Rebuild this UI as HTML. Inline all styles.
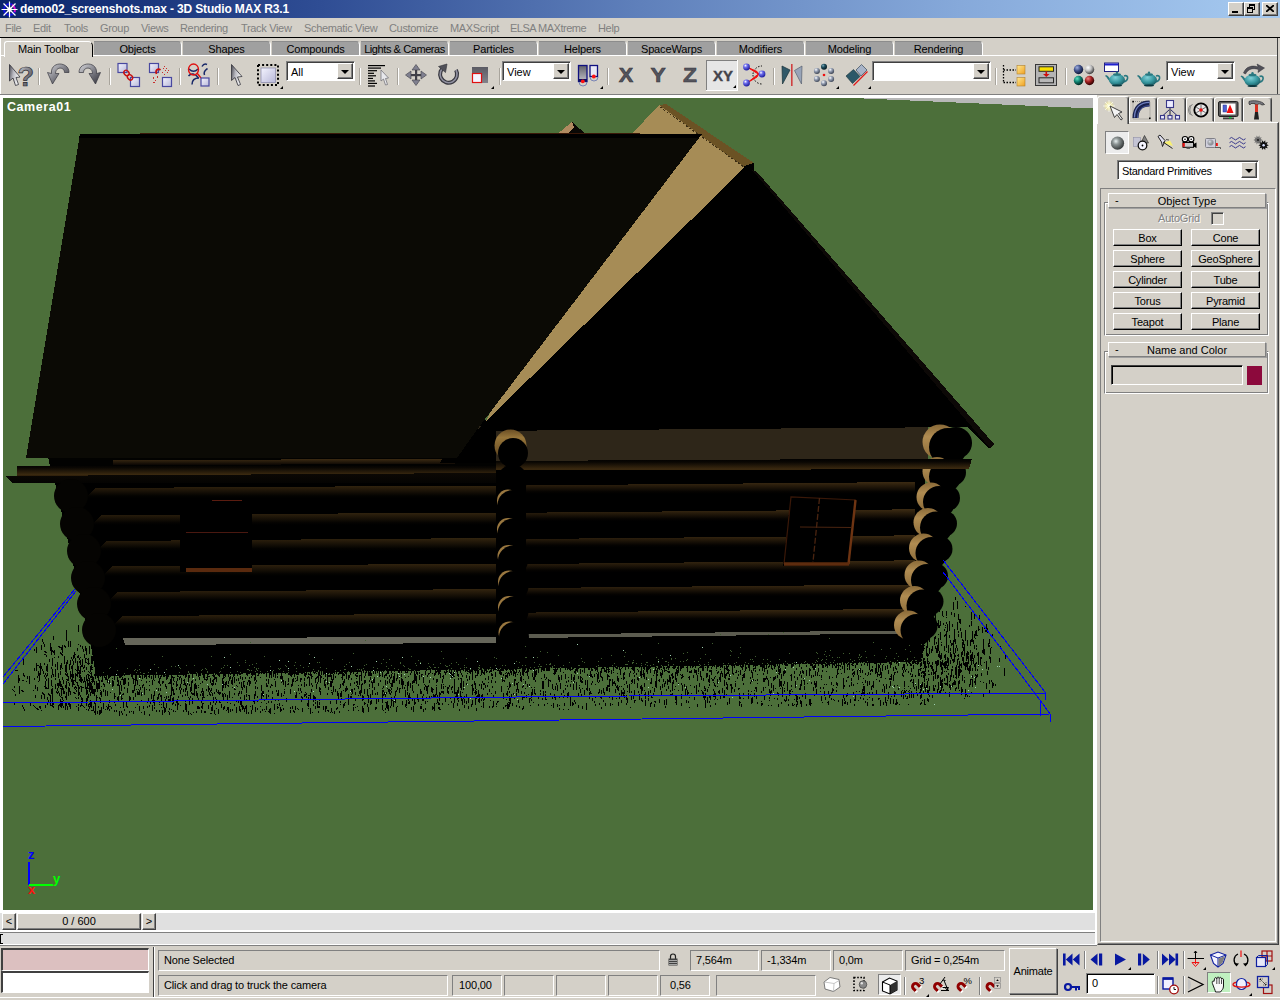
<!DOCTYPE html>
<html>
<head>
<meta charset="utf-8">
<title>3D Studio MAX</title>
<style>
*{box-sizing:border-box;margin:0;padding:0}
html,body{width:1280px;height:1000px;overflow:hidden;background:#d4d0c8;font-family:"Liberation Sans",sans-serif;font-size:11px;color:#000}
.abs{position:absolute}
#title{position:absolute;left:0;top:0;width:1280px;height:18px;background:linear-gradient(90deg,#0a246a 0%,#2f4d94 25%,#5f80bb 50%,#86a9da 75%,#a6caf0 100%)}
#title .t{position:absolute;left:20px;top:1px;color:#fff;font-weight:bold;font-size:12px;line-height:16px;white-space:nowrap;letter-spacing:-0.15px}
.wbtn{position:absolute;top:2px;width:16px;height:14px;background:#d4d0c8;border:1px solid;border-color:#fff #404040 #404040 #fff;box-shadow:inset -1px -1px 0 #808080}
#menu{position:absolute;left:0;top:18px;width:1280px;height:19px;background:#d4d0c8}
#menu span{position:absolute;top:4px;color:#808080;font-size:11px;line-height:13px;white-space:nowrap;letter-spacing:-0.33px}
#tabline{position:absolute;left:0;top:37px;width:1280px;height:1px;background:#000}
.tab{position:absolute;top:41px;height:14px;width:88px;background:#a0a0a0;border-radius:0 4px 0 0;border-right:1px solid #fff;border-top:1px solid #8c8c8c;text-align:center;font-size:11px;line-height:14px;white-space:nowrap;color:#000;letter-spacing:-0.15px}
.tab.act{background:#d4d0c8;top:41px;height:16px;border:1px solid #fff;border-bottom:none;border-right:1px solid #000;border-radius:3px 5px 0 0;line-height:14px;z-index:3}
#tabunder{position:absolute;left:0;top:55px;width:1278px;height:1px;background:#fff}
#tbbottom{position:absolute;left:0;top:94px;width:1280px;height:1px;background:#808080}
#vpframe{position:absolute;left:0;top:95px;width:1097px;height:818px;background:#fff}
#vp{position:absolute;left:3px;top:98px;width:1090px;height:812px;background:#4c6f3a;overflow:hidden}
.sep{position:absolute;top:63px;width:2px;height:26px;border-left:1px solid #808080;border-right:1px solid #fff}
.raised{background:#d4d0c8;border:1px solid;border-color:#fff #404040 #404040 #fff;box-shadow:inset -1px -1px 0 #808080}
.sunken{border:1px solid;border-color:#808080 #fff #fff #808080;box-shadow:inset 1px 1px 0 #404040}
.btn{position:absolute;background:#d4d0c8;border:1px solid;border-color:#fff #404040 #404040 #fff;box-shadow:inset -1px -1px 0 #808080;text-align:center;font-size:12px;white-space:nowrap}
.combo{position:absolute;background:#fff;border:1px solid;border-color:#808080 #fff #fff #808080;box-shadow:inset 1px 1px 0 #404040;font-size:12px}
.combo .tx{position:absolute;left:4px;top:1px;line-height:14px;white-space:nowrap}
.combo .dd{position:absolute;right:1px;top:1px;bottom:1px;width:16px;background:#d4d0c8;border:1px solid;border-color:#fff #404040 #404040 #fff;box-shadow:inset -1px -1px 0 #808080}
.combo .dd:after{content:"";position:absolute;left:3px;top:6px;border:4px solid transparent;border-top:4px solid #000;border-bottom:none}
.field{position:absolute;background:#d4d0c8;border:1px solid;border-color:#808080 #fff #fff #808080;font-size:12px;line-height:19px;white-space:nowrap;padding-left:5px}

#cmdouter{position:absolute;left:1097px;top:122px;width:182px;height:823px;background:#d4d0c8;border:1px solid;border-color:#d4d0c8 #404040 #404040 #d4d0c8;box-shadow:inset -1px -1px 0 #808080}
#cmdinner{position:absolute;left:1100px;top:188px;width:176px;height:754px;border:1px solid;border-color:#808080 #fff #fff #808080}
.ctab{position:absolute;top:97px;width:29px;height:25px;background:#d4d0c8;border:1px solid;border-color:#fff #404040 #d4d0c8 #fff;border-radius:3px 3px 0 0;box-shadow:inset -1px 0 0 #808080}
.ctab.act{top:96px;height:28px;width:32px;z-index:2;border-bottom:none}
.grp{position:absolute;border:1px solid;border-color:#808080 #fff #fff #808080;box-shadow:inset 1px 1px 0 #fff,inset -1px -1px 0 #808080}
.roll{position:absolute;left:1108px;width:158px;height:15px;background:#d4d0c8;border:1px solid;border-color:#fff #808080 #808080 #fff;box-shadow:1px 1px 0 #a0a0a0;text-align:center;font-size:11px;line-height:14px}
.roll i{position:absolute;left:6px;top:-1px;font-style:normal}
.pbtn{position:absolute;width:69px;height:17px;background:#d4d0c8;border:1px solid;border-color:#fff #000 #000 #fff;box-shadow:inset -1px -1px 0 #808080;text-align:center;font-size:11px;line-height:14px;padding-top:1px;letter-spacing:-0.2px}
.sf{position:absolute;height:21px;border:1px solid;border-color:#808080 #fff #fff #808080;font-size:11px;line-height:19px;padding-left:5px;white-space:nowrap;letter-spacing:-0.15px}
.vsep{position:absolute;width:2px;border-left:1px solid #808080;border-right:1px solid #fff}
.ico{position:absolute}
</style>
</head>
<body>
<!-- TITLE -->
<div id="title"><svg class="abs" style="left:1px;top:1px" width="17" height="17" viewBox="0 0 17 17"><circle cx="8.5" cy="8.5" r="5.5" fill="none" stroke="#1010e0" stroke-width="2"/><path d="M11,4 A5.500,5.500 0 0 1 13.500,11" fill="none" stroke="#e010c0" stroke-width="2"/><g stroke="#fff" stroke-width="1.200"><path d="M8.500,0.500V16.500M0.500,8.500H16.500M2.500,2.500L14.500,14.500M14.500,2.500L2.500,14.500"/></g><circle cx="8.500" cy="8.500" r="2.200" fill="#fff"/></svg><div class="t">demo02_screenshots.max - 3D Studio MAX R3.1</div>
<div class="wbtn" style="left:1228px"><i style="position:absolute;left:3px;top:8px;width:6px;height:2px;background:#000"></i></div><div class="wbtn" style="left:1244px"><i style="position:absolute;left:4px;top:1px;width:6px;height:6px;border:1px solid #000;border-top-width:2px"></i><i style="position:absolute;left:2px;top:4px;width:6px;height:6px;border:1px solid #000;border-top-width:2px;background:#d4d0c8"></i></div><div class="wbtn" style="left:1262px"><svg style="position:absolute;left:3px;top:2px" width="8" height="7" viewBox="0 0 8 7"><path d="M0,0L8,7M8,0L0,7" stroke="#000" stroke-width="1.800"/></svg></div>
</div>
<!-- MENU -->
<div id="menu">
<span style="left:5px">File</span><span style="left:33px">Edit</span><span style="left:64px">Tools</span><span style="left:100px">Group</span><span style="left:141px">Views</span><span style="left:180px">Rendering</span><span style="left:241px">Track View</span><span style="left:304px">Schematic View</span><span style="left:389px">Customize</span><span style="left:450px">MAXScript</span><span style="left:510px;letter-spacing:-0.5px">ELSA MAXtreme</span><span style="left:598px">Help</span>
</div>
<div id="tabline"></div>
<!-- TABS -->
<div class="tab act" style="left:4px;width:89px">Main Toolbar</div>
<div class="tab" style="left:94px">Objects</div>
<div class="tab" style="left:183px">Shapes</div>
<div class="tab" style="left:272px">Compounds</div>
<div class="tab" style="left:361px;letter-spacing:-0.42px">Lights &amp; Cameras</div>
<div class="tab" style="left:450px">Particles</div>
<div class="tab" style="left:539px">Helpers</div>
<div class="tab" style="left:628px">SpaceWarps</div>
<div class="tab" style="left:717px">Modifiers</div>
<div class="tab" style="left:806px">Modeling</div>
<div class="tab" style="left:895px">Rendering</div>
<div id="tabunder"></div><div class="abs" style="left:0;top:38px;width:1px;height:56px;background:#fff"></div><div class="abs" style="left:1277px;top:38px;width:1px;height:56px;background:#404040"></div>
<!-- TOOLBAR -->
<!--TB-START-->
<svg class="abs" style="left:0;top:0" width="1280" height="96" viewBox="0 0 1280 96">
<defs>
<linearGradient id="mt" x1="0" y1="0" x2="1" y2="1"><stop offset="0" stop-color="#d8d8dc"/><stop offset="0.5" stop-color="#808088"/><stop offset="1" stop-color="#303038"/></linearGradient>
<linearGradient id="mt2" x1="0" y1="0" x2="0" y2="1"><stop offset="0" stop-color="#404048"/><stop offset="0.5" stop-color="#a0a0a8"/><stop offset="1" stop-color="#404048"/></linearGradient>
<linearGradient id="bx" x1="0" y1="0" x2="1" y2="1"><stop offset="0" stop-color="#f4f4ff"/><stop offset="1" stop-color="#b8b8d8"/></linearGradient>
<radialGradient id="ball" cx="0.35" cy="0.3" r="0.7"><stop offset="0" stop-color="#fff"/><stop offset="0.35" stop-color="#7070f0"/><stop offset="1" stop-color="#2020a0"/></radialGradient>
<radialGradient id="gball" cx="0.35" cy="0.3" r="0.7"><stop offset="0" stop-color="#fff"/><stop offset="0.4" stop-color="#9aa4b8"/><stop offset="1" stop-color="#404858"/></radialGradient>
<radialGradient id="tball" cx="0.35" cy="0.3" r="0.7"><stop offset="0" stop-color="#80b0c0"/><stop offset="0.4" stop-color="#205060"/><stop offset="1" stop-color="#001820"/></radialGradient>
<radialGradient id="b1" cx="0.35" cy="0.3" r="0.7"><stop offset="0" stop-color="#a0b0e0"/><stop offset="0.5" stop-color="#405088"/><stop offset="1" stop-color="#101838"/></radialGradient>
<radialGradient id="b2" cx="0.35" cy="0.3" r="0.7"><stop offset="0" stop-color="#fff"/><stop offset="0.5" stop-color="#c0c0c0"/><stop offset="1" stop-color="#404040"/></radialGradient>
<radialGradient id="b3" cx="0.35" cy="0.3" r="0.7"><stop offset="0" stop-color="#60e0c0"/><stop offset="0.5" stop-color="#108070"/><stop offset="1" stop-color="#002820"/></radialGradient>
<radialGradient id="b4" cx="0.35" cy="0.3" r="0.7"><stop offset="0" stop-color="#f08080"/><stop offset="0.5" stop-color="#a02020"/><stop offset="1" stop-color="#300000"/></radialGradient>
<radialGradient id="tp" cx="0.4" cy="0.3" r="0.8"><stop offset="0" stop-color="#80d0d8"/><stop offset="0.5" stop-color="#3898a0"/><stop offset="1" stop-color="#104850"/></radialGradient>
<linearGradient id="yl" x1="0" y1="0" x2="1" y2="1"><stop offset="0" stop-color="#ffe890"/><stop offset="1" stop-color="#f0a020"/></linearGradient>
<linearGradient id="pv" x1="0" y1="0" x2="0" y2="1"><stop offset="0" stop-color="#606068"/><stop offset="1" stop-color="#c0c0c8"/></linearGradient>
<g id="teapot"><path d="M-11,-4 C-8,-3 -7,0 -6,2 L-7,3 C-9,1 -10,-2 -12,-3 Z" fill="#2a7880"/><path d="M7,-3 C12,-5 12,2 6,3" fill="none" stroke="#2a7880" stroke-width="1.6"/><ellipse cx="0" cy="1" rx="8" ry="6" fill="url(#tp)"/><ellipse cx="0" cy="-4.5" rx="4" ry="1.3" fill="#2a7880"/><circle cx="0" cy="-6.3" r="1.2" fill="#2a7880"/><ellipse cx="0" cy="6.5" rx="5" ry="1" fill="#0c3840"/></g>
<path id="fly" d="M0,0 h-3 l3,-3 z" fill="#000"/>
<linearGradient id="cur" x1="0" y1="0" x2="1" y2="0.3"><stop offset="0" stop-color="#484850"/><stop offset="0.45" stop-color="#b8b8c0"/><stop offset="1" stop-color="#fcfcfc"/></linearGradient>
</defs>
<path d="M9.500,64.500 L9.500,81 L13,78 L15.500,85.500 L18.500,84.500 L16,77.500 L20,77 Z" fill="url(#cur)" stroke="#303038" stroke-width="0.800"/>
<text x="17.500" y="85.500" font-family="Liberation Sans" font-weight="bold" font-size="27" fill="url(#mt)" stroke="#2a2a30" stroke-width="0.700">?</text>
<rect x="38" y="68" width="1" height="17" fill="#a8a49c"/><rect x="39" y="68" width="1" height="17" fill="#fff"/>
<path d="M69,72.5 C69,61 50,61 51.5,73.5 L47.5,72.5 L52.5,84 L59,73.5 L55.5,73.5 C55.5,66.5 64.5,66.5 64.5,72.5 Z" fill="url(#mt)" stroke="#383840" stroke-width="0.7"/>
<path d="M79,72.5 C79,61 98,61 96.5,73.5 L100.5,72.5 L95.5,84 L89,73.5 L92.5,73.5 C92.5,66.5 83.5,66.5 83.5,72.5 Z" fill="url(#mt)" stroke="#383840" stroke-width="0.7"/>
<rect x="109" y="68" width="1" height="17" fill="#a8a49c"/><rect x="110" y="68" width="1" height="17" fill="#fff"/>
<rect x="118" y="63.5" width="9" height="9" fill="url(#bx)" stroke="#4848a0" stroke-width="1.2"/>
<rect x="130.5" y="77.5" width="9" height="9" fill="url(#bx)" stroke="#4848a0" stroke-width="1.2"/>
<ellipse cx="126.5" cy="73" rx="2.3" ry="3" fill="none" stroke="#c81010" stroke-width="1.4" transform="rotate(-40 126.5 73)"/><ellipse cx="130" cy="77.3" rx="2.3" ry="3" fill="none" stroke="#c81010" stroke-width="1.4" transform="rotate(-40 130 77.3)"/>
<rect x="149.5" y="63.5" width="9" height="9" fill="url(#bx)" stroke="#4848a0" stroke-width="1.2"/>
<rect x="162.5" y="77.5" width="9" height="9" fill="url(#bx)" stroke="#4848a0" stroke-width="1.2"/>
<path d="M156.5,74 C155,70 158,68 160.5,70" fill="none" stroke="#c81010" stroke-width="1.8"/>
<g fill="#c83030"><rect x="163" y="68" width="1" height="1"/><rect x="165" y="70" width="1" height="1"/><rect x="162" y="72" width="1" height="1"/><rect x="167" y="72" width="1" height="1"/><rect x="164" y="74" width="1" height="1"/><rect x="153" y="77" width="1" height="2"/><rect x="157" y="76" width="1" height="2"/><rect x="155" y="80" width="1" height="1"/><rect x="153" y="82" width="2" height="1"/><rect x="164" y="66" width="1" height="1"/><rect x="166" y="68" width="1" height="1"/><rect x="168" y="70" width="1" height="1"/></g>
<rect x="179" y="68" width="1" height="17" fill="#a8a49c"/><rect x="180" y="68" width="1" height="17" fill="#fff"/>
<g fill="none" stroke="#182868" stroke-width="1.5"><path d="M189,69 C192,72 195,72 198,69"/><path d="M188.5,76 C191,73 195,73 198.5,78"/><path d="M202,66.5 C204,63 206,64 207,64.5"/><path d="M204.500,75 C203,71 206,70 207.500,68.500"/><path d="M192,84.500 C192,79 195,78 199,78"/></g>
<ellipse cx="193.5" cy="69.5" rx="5" ry="5.5" fill="none" stroke="#e01010" stroke-width="1.4"/><path d="M197,73 L201,78" stroke="#e01010" stroke-width="1.4"/>
<rect x="201" y="78" width="8" height="8" fill="url(#bx)" stroke="#4848a0" stroke-width="1.2"/>
<rect x="217" y="68" width="1" height="17" fill="#a8a49c"/><rect x="218" y="68" width="1" height="17" fill="#fff"/>
<path d="M231.500,64.500 L231.500,80.500 L235,77.500 L238,85.500 L240.500,84.500 L237.500,77 L242,76.500 Z" fill="url(#cur)" stroke="#303038" stroke-width="0.800"/>
<rect x="258" y="65" width="20" height="20" fill="none" stroke="#000" stroke-width="2" stroke-dasharray="2,2.1"/><rect x="261" y="68" width="14.500" height="14.500" fill="url(#bx)" stroke="#9090b0" stroke-width="0.8"/>
<use href="#fly" x="283" y="89"/>
<rect x="359" y="68" width="1" height="17" fill="#a8a49c"/><rect x="360" y="68" width="1" height="17" fill="#fff"/>
<rect x="368" y="65.0" width="17" height="1.2" fill="#000"/>
<rect x="368" y="67.5" width="13" height="1.2" fill="#000"/>
<rect x="368" y="70.1" width="9" height="1.2" fill="#000"/>
<rect x="368" y="72.7" width="6" height="1.2" fill="#000"/>
<rect x="368" y="75.2" width="8" height="1.2" fill="#000"/>
<rect x="368" y="77.8" width="5" height="1.2" fill="#000"/>
<rect x="368" y="80.3" width="7" height="1.2" fill="#000"/>
<rect x="368" y="82.8" width="9" height="1.2" fill="#000"/>
<rect x="368" y="85.4" width="7" height="1.2" fill="#000"/>
<path d="M381,70 L381,81 L383.500,79 L385.500,85 L387.500,84.500 L385.500,78.500 L388.500,78 Z" fill="#e8e8ec" stroke="#686870" stroke-width="0.7"/>
<rect x="397" y="68" width="1" height="17" fill="#a8a49c"/><rect x="398" y="68" width="1" height="17" fill="#fff"/>
<g fill="#404048"><rect x="415" y="66" width="2.2" height="18"/><rect x="407" y="74" width="18" height="2.2"/></g>
<g fill="#808090" stroke="#404048" stroke-width="0.6"><path d="M416,64.500 L420,70 L412,70 Z"/><path d="M416,85.500 L420,80 L412,80 Z"/><path d="M405.500,75 L411,71 L411,79 Z"/><path d="M426.500,75 L421,71 L421,79 Z"/></g>
<path d="M445,66.500 A8.500,8.500 0 1 0 456,70" fill="none" stroke="#383840" stroke-width="4"/><path d="M445,66.500 A8.500,8.500 0 1 0 456,70" fill="none" stroke="#9090a0" stroke-width="1.6"/>
<path d="M438.500,66.500 L447,64 L445.500,72.500 Z" fill="#505058" stroke="#303038" stroke-width="0.6"/>
<rect x="472" y="67" width="16" height="16" fill="url(#pv)"/><rect x="472" y="67" width="16" height="16" fill="#585860" opacity="0.6"/><rect x="472.500" y="73.500" width="9" height="9" fill="#f4f4ff" stroke="#e01010" stroke-width="1.2"/>
<use href="#fly" x="494" y="89"/>
<rect x="499" y="68" width="1" height="17" fill="#a8a49c"/><rect x="500" y="68" width="1" height="17" fill="#fff"/>
<rect x="578.500" y="65.500" width="8.500" height="16" fill="url(#pv)" stroke="#101080" stroke-width="1.3"/><rect x="590" y="65.500" width="7.500" height="11" fill="#e8e8f4" stroke="#101080" stroke-width="1.3"/>
<path d="M579,82 A4,4 0 0 0 587,82" fill="none" stroke="#6070b0" stroke-width="0.8"/><path d="M590,77 A4,4 0 0 0 598,77" fill="none" stroke="#6070b0" stroke-width="0.8"/>
<rect x="578.500" y="79" width="8.500" height="2.500" fill="#101060"/><circle cx="582.800" cy="81.300" r="1.900" fill="#ff1010"/><circle cx="593.800" cy="76.500" r="1.900" fill="#ff1010"/>
<use href="#fly" x="603" y="89"/>
<rect x="607" y="68" width="1" height="17" fill="#a8a49c"/><rect x="608" y="68" width="1" height="17" fill="#fff"/>
<text x="618.8" y="82" font-family="Liberation Sans" font-weight="bold" font-size="19.500" fill="#54545c" stroke="#34343c" stroke-width="0.500" textLength="14.5" lengthAdjust="spacingAndGlyphs">X</text>
<text x="650.5" y="82" font-family="Liberation Sans" font-weight="bold" font-size="19.500" fill="#54545c" stroke="#34343c" stroke-width="0.500" textLength="15.3" lengthAdjust="spacingAndGlyphs">Y</text>
<text x="683" y="82" font-family="Liberation Sans" font-weight="bold" font-size="19.500" fill="#54545c" stroke="#34343c" stroke-width="0.500" textLength="14" lengthAdjust="spacingAndGlyphs">Z</text>
<rect x="706" y="60" width="32" height="31" fill="#e6e6e6"/><rect x="706" y="60" width="32" height="1" fill="#808080"/><rect x="706" y="60" width="1" height="31" fill="#808080"/><rect x="706" y="90" width="32" height="1" fill="#fff"/><rect x="737" y="60" width="1" height="31" fill="#fff"/>
<text x="713" y="81.300" font-family="Liberation Sans" font-weight="bold" font-size="14" fill="#44444c" stroke="#44444c" stroke-width="0.400" textLength="20" lengthAdjust="spacingAndGlyphs">XY</text>
<use href="#fly" x="736" y="88"/>
<path d="M753,74 A9,9 0 0 1 762,66 M753,75 A9,9 0 0 0 762,84" fill="none" stroke="#000" stroke-width="1" stroke-dasharray="1.500,1.500"/>
<path d="M747,67 L759,74.500 L757,71.500 Z M747,83 L759,73.500 L757,77 Z" fill="#f01010" stroke="#f01010" stroke-width="1"/>
<circle cx="746.5" cy="67" r="3.400" fill="url(#ball)"/>
<circle cx="762" cy="74" r="3.400" fill="url(#ball)"/>
<circle cx="746.5" cy="83" r="3.400" fill="url(#ball)"/>
<rect x="773" y="68" width="1" height="17" fill="#a8a49c"/><rect x="774" y="68" width="1" height="17" fill="#fff"/>
<path d="M782,66 L790,70 L782.500,84 Z" fill="#305868" stroke="#183038" stroke-width="0.7"/><path d="M802,66 L794.500,70.500 L801.500,84 Z" fill="#98a4b8" stroke="#586070" stroke-width="0.7"/><rect x="791" y="64" width="1.600" height="22" fill="#d04040"/>
<circle cx="824.0" cy="66.8" r="3" fill="url(#tball)"/>
<circle cx="831.1" cy="70.9" r="3" fill="url(#gball)"/>
<circle cx="831.1" cy="79.1" r="3" fill="url(#gball)"/>
<circle cx="824.0" cy="83.2" r="3" fill="url(#gball)"/>
<circle cx="816.9" cy="79.1" r="3" fill="url(#gball)"/>
<circle cx="816.9" cy="70.9" r="3" fill="url(#gball)"/>
<circle cx="824" cy="75" r="1.300" fill="#f01010"/><use href="#fly" x="839" y="89"/>
<path d="M846,76 L853.500,69.500 L860,76.500 L852.500,83.500 Z" fill="#2c5868" stroke="#183038" stroke-width="0.6"/><path d="M856,70 L861.500,64.500 L867,70 L861,76 Z" fill="#a8b4c8" stroke="#485868" stroke-width="0.8"/><path d="M853.500,85.500 L867.500,71.500" stroke="#e01818" stroke-width="1.300"/><use href="#fly" x="871" y="89"/>
<rect x="995" y="68" width="1" height="17" fill="#a8a49c"/><rect x="996" y="68" width="1" height="17" fill="#fff"/>
<path d="M1003.500,65 V82.500 M1003.500,70 H1016 M1003.500,82.500 H1016" fill="none" stroke="#000" stroke-width="1.300" stroke-dasharray="1.500,1.500"/><rect x="1017" y="65.500" width="8" height="8.500" fill="url(#yl)" stroke="#b08030" stroke-width="0.6"/><rect x="1017" y="77.500" width="8" height="8.500" fill="url(#yl)" stroke="#b08030" stroke-width="0.6"/>
<rect x="1035.500" y="64.500" width="21" height="21" fill="#b4b4b4" stroke="#383838" stroke-width="1"/><rect x="1039" y="66.800" width="14.500" height="4.500" fill="#f8e000" stroke="#282828" stroke-width="1"/><rect x="1039" y="77.800" width="14.500" height="5" fill="#b8b8b8" stroke="#282828" stroke-width="1"/><path d="M1045.500,71.500 h1.600 v2.500 h2.500 l-3.300,3 l-3.300,-3 h2.500 z" fill="#d01010"/>
<rect x="1065" y="68" width="1" height="17" fill="#a8a49c"/><rect x="1066" y="68" width="1" height="17" fill="#fff"/>
<circle cx="1078.5" cy="69.5" r="4.700" fill="url(#b1)"/>
<circle cx="1089.5" cy="69.5" r="4.700" fill="url(#b2)"/>
<circle cx="1078.5" cy="80.5" r="4.700" fill="url(#b3)"/>
<circle cx="1089.5" cy="80.5" r="4.700" fill="url(#b4)"/>
<rect x="1104.500" y="63" width="14" height="8.500" fill="#fff" stroke="#202080" stroke-width="1"/><rect x="1105" y="63.500" width="13" height="2" fill="#2020d0"/><use href="#teapot" x="1117" y="79"/>
<use href="#teapot" x="1149" y="79"/><use href="#fly" x="1163" y="89"/>
<use href="#teapot" x="1252.500" y="79.500"/><path d="M1243.500,73 C1246,66 1253,65 1258,67 L1257,64 L1264.500,68 L1258,72.500 L1258.500,69.500 C1253,67.500 1248,69 1245.500,74 Z" fill="#505058" stroke="#303038" stroke-width="0.5"/>
</svg>
<div class="combo" style="left:286px;top:61px;width:69px;height:20px"><span class="tx" style="font-size:11px;top:3px">All</span><span class="dd"></span></div>
<div class="combo" style="left:502px;top:61px;width:69px;height:20px"><span class="tx" style="font-size:11px;top:3px">View</span><span class="dd"></span></div>
<div class="combo" style="left:872px;top:61px;width:119px;height:20px"><span class="dd"></span></div>
<div class="combo" style="left:1166px;top:61px;width:69px;height:20px"><span class="tx" style="font-size:11px;top:3px">View</span><span class="dd"></span></div>
<!--TB-END-->
<div id="tbbottom"></div>
<!-- VIEWPORT -->
<div id="vpframe"></div>
<div id="vp">
<!--SCENE-START-->
<svg class="abs" style="left:-3px;top:-98px" width="1280" height="1000" viewBox="0 0 1280 1000" shape-rendering="crispEdges">
<defs>
<linearGradient id="lg" x1="0" y1="0" x2="0" y2="1"><stop offset="0" stop-color="#3c2b13"/><stop offset="0.1" stop-color="#2c1f0d"/><stop offset="0.34" stop-color="#050301"/><stop offset="0.42" stop-color="#000"/><stop offset="1" stop-color="#000"/></linearGradient>
<linearGradient id="bm" x1="0" y1="0" x2="0" y2="1"><stop offset="0" stop-color="#000"/><stop offset="0.3" stop-color="#0a0703"/><stop offset="0.9" stop-color="#3c2a10"/><stop offset="1" stop-color="#2a1c0a"/></linearGradient>
<linearGradient id="bm2" x1="0" y1="0" x2="0" y2="1"><stop offset="0" stop-color="#0c0804"/><stop offset="1" stop-color="#040302"/></linearGradient>
<linearGradient id="cr" x1="0" y1="0" x2="0" y2="1"><stop offset="0" stop-color="#8a6a38"/><stop offset="0.35" stop-color="#b08c52"/><stop offset="1" stop-color="#8a6a38"/></linearGradient>
<linearGradient id="lg2" x1="0" y1="0" x2="0" y2="1"><stop offset="0" stop-color="#3c2b13"/><stop offset="1" stop-color="#0a0603"/></linearGradient>
<linearGradient id="cr2" x1="0" y1="0" x2="0" y2="1"><stop offset="0" stop-color="#6a4e24"/><stop offset="0.25" stop-color="#96753a"/><stop offset="0.6" stop-color="#7a5c2c"/><stop offset="1" stop-color="#3a2a10"/></linearGradient>
<linearGradient id="lgL" x1="0" y1="0" x2="0" y2="1"><stop offset="0" stop-color="#33250f"/><stop offset="0.1" stop-color="#261b0b"/><stop offset="0.36" stop-color="#040301"/><stop offset="0.44" stop-color="#000"/><stop offset="1" stop-color="#000"/></linearGradient>
</defs>
<polygon points="852,98 1094,98 1094,108.5" fill="#b8b8b8"/>
<polygon points="556,135 572,122 577,127 566,135" fill="#b08a60"/>
<polygon points="572,122 587,135 566,135 574,127" fill="#0a0805"/>
<polygon points="455,462 500,462 500,420 474,420" fill="#000"/>
<polygon points="630,136 659,105 748,169 480,433" fill="#a68c56"/>
<polygon points="659,105 666,104 754,163 744,167" fill="#6b5224"/>
<polygon points="744,166 754,163 754,172 745,174" fill="#000"/>
<line x1="660" y1="107" x2="744" y2="167" stroke="#3a2c14" stroke-width="1" stroke-dasharray="2,2"/>
<rect x="478" y="426" width="450" height="36" fill="#2e2619"/>
<polygon points="744,168 754,172 993,445 989,448 967,427 476,431" fill="#000"/>
<polygon points="752,170 757,172 994,444 990,448" fill="#0c0806"/>
<polygon points="54,478 496,462 925,460 925,640 922,662 96,676 90,640" fill="#000"/>
<polygon points="95,488 496,485.5 496,511.5 83,514 83,500" fill="url(#lgL)"/>
<polygon points="101,515 496,512.5 496,538.5 89,541 89,527" fill="url(#lgL)"/>
<polygon points="106,541 496,538 496,564 94,567 94,553" fill="url(#lgL)"/>
<polygon points="112,566.5 496,563.5 496,589.5 100,592.5 100,578.5" fill="url(#lgL)"/>
<polygon points="117,592 496,589 496,615 105,618 105,604" fill="url(#lgL)"/>
<polygon points="122,616 496,613.6 496,639.6 110,642 110,628" fill="url(#lgL)"/>
<polygon points="526,485.4 915,482 915,507 526,510.4" fill="url(#lg)"/>
<polygon points="526,512.7 915,509.3 915,534.3 526,537.7" fill="url(#lg)"/>
<polygon points="526,539 915,535.3 915,560.3 526,564" fill="url(#lg)"/>
<polygon points="526,564 915,560.3 915,585.3 526,589" fill="url(#lg)"/>
<polygon points="526,588 915,584.5 915,609.5 526,613" fill="url(#lg)"/>
<polygon points="526,612.6 915,608.8 915,633.8 526,637.6" fill="url(#lg)"/>
<polygon points="123,638 496,637 496,643 125,645" fill="#66665a"/>
<polygon points="526,634.500 905,630.500 905,633.500 526,638" fill="#5c5c50"/>
<polygon points="17,466 496,464 496,473 17,476" fill="url(#bm)"/>
<polygon points="6,476 496,473 496,483 12,483" fill="url(#bm2)"/>
<polygon points="48,457 496,457 496,466 50,466" fill="#020201"/>
<polygon points="113,460 455,459 455,464 113,465" fill="url(#lg2)"/>
<polygon points="455,431 478,431 496,431 496,463 440,463" fill="#000"/>
<polygon points="496,461 972,458.500 969,469 496,470.500" fill="url(#bm)"/>
<circle cx="71" cy="496" r="17" fill="#050402" shape-rendering="auto"/>
<circle cx="77" cy="524" r="17" fill="#050402" shape-rendering="auto"/>
<circle cx="84" cy="551" r="17" fill="#050402" shape-rendering="auto"/>
<circle cx="88" cy="578" r="17" fill="#050402" shape-rendering="auto"/>
<circle cx="94" cy="604" r="17" fill="#050402" shape-rendering="auto"/>
<circle cx="99" cy="630" r="17" fill="#050402" shape-rendering="auto"/>
<polygon points="80,134 702,134 476,431 457,458 26,458" fill="#0b0a05"/>
<polygon points="80,134 702,134 699,138 79,138" fill="#000"/>
<line x1="140" y1="133.5" x2="640" y2="133.5" stroke="#3a1808" stroke-width="1"/>
<circle cx="510.5" cy="445.5" r="16" fill="url(#cr2)" shape-rendering="auto"/><circle cx="513" cy="453" r="15" fill="#000" shape-rendering="auto"/>
<circle cx="512.5" cy="479.5" r="15" fill="#000" shape-rendering="auto"/>
<circle cx="508" cy="500.5" r="11" fill="#9a7840" shape-rendering="auto"/>
<circle cx="512.5" cy="505.0" r="15" fill="#000" shape-rendering="auto"/>
<circle cx="508" cy="529" r="11" fill="#9a7840" shape-rendering="auto"/>
<circle cx="512.5" cy="533.5" r="15" fill="#000" shape-rendering="auto"/>
<circle cx="508.5" cy="556" r="11" fill="#9a7840" shape-rendering="auto"/>
<circle cx="513.0" cy="560.5" r="15" fill="#000" shape-rendering="auto"/>
<circle cx="509" cy="581.5" r="11" fill="#9a7840" shape-rendering="auto"/>
<circle cx="513.5" cy="586.0" r="15" fill="#000" shape-rendering="auto"/>
<circle cx="509" cy="607" r="11" fill="#9a7840" shape-rendering="auto"/>
<circle cx="513.5" cy="611.5" r="15" fill="#000" shape-rendering="auto"/>
<circle cx="509.5" cy="632.5" r="11" fill="#9a7840" shape-rendering="auto"/>
<circle cx="514.0" cy="637.0" r="15" fill="#000" shape-rendering="auto"/>
<rect x="497" y="640" width="30" height="28" fill="#000"/>
<circle cx="940" cy="442" r="17.5" fill="url(#cr)" shape-rendering="auto"/>
<circle cx="948" cy="447" r="19" fill="#000" shape-rendering="auto"/>
<circle cx="956" cy="443" r="16" fill="#000" shape-rendering="auto"/>
<circle cx="937" cy="471.5" r="14.5" fill="url(#cr)" shape-rendering="auto"/>
<circle cx="945" cy="476.5" r="16" fill="#000" shape-rendering="auto"/>
<circle cx="953" cy="472.5" r="13" fill="#000" shape-rendering="auto"/>
<circle cx="931" cy="497" r="14.5" fill="url(#cr)" shape-rendering="auto"/>
<circle cx="939" cy="502" r="16" fill="#000" shape-rendering="auto"/>
<circle cx="947" cy="498" r="13" fill="#000" shape-rendering="auto"/>
<circle cx="928" cy="522.5" r="14.5" fill="url(#cr)" shape-rendering="auto"/>
<circle cx="936" cy="527.5" r="16" fill="#000" shape-rendering="auto"/>
<circle cx="944" cy="523.5" r="13" fill="#000" shape-rendering="auto"/>
<circle cx="923.5" cy="548" r="14.5" fill="url(#cr)" shape-rendering="auto"/>
<circle cx="931.5" cy="553" r="16" fill="#000" shape-rendering="auto"/>
<circle cx="939.5" cy="549" r="13" fill="#000" shape-rendering="auto"/>
<circle cx="919" cy="575" r="14.5" fill="url(#cr)" shape-rendering="auto"/>
<circle cx="927" cy="580" r="16" fill="#000" shape-rendering="auto"/>
<circle cx="935" cy="576" r="13" fill="#000" shape-rendering="auto"/>
<circle cx="914.5" cy="600.5" r="14.5" fill="url(#cr)" shape-rendering="auto"/>
<circle cx="922.5" cy="605.5" r="16" fill="#000" shape-rendering="auto"/>
<circle cx="930.5" cy="601.5" r="13" fill="#000" shape-rendering="auto"/>
<circle cx="908.5" cy="625" r="14.5" fill="url(#cr)" shape-rendering="auto"/>
<circle cx="916.5" cy="630" r="16" fill="#000" shape-rendering="auto"/>
<circle cx="924.5" cy="626" r="13" fill="#000" shape-rendering="auto"/>
<polygon points="900,459.500 972,458.500 969,469 900,469.500" fill="url(#bm)"/>
<rect x="180" y="500" width="72" height="72" fill="#000"/>
<rect x="186" y="568" width="66" height="4" fill="#5a2a0e"/>
<rect x="212" y="500" width="30" height="1" fill="#5a1c10"/><rect x="186" y="532" width="62" height="1" fill="#4a1810"/>
<polygon points="790.6,496.6 856,499.8 849,565.5 783,565.5" fill="#000"/>
<path d="M784,564 L791,497 L856,500" fill="none" stroke="#3a1808" stroke-width="1.200" shape-rendering="auto"/><path d="M855.500,500 L848.500,564" fill="none" stroke="#6e3412" stroke-width="2.400" shape-rendering="auto"/><path d="M784,564 L849,564" fill="none" stroke="#5e2c0e" stroke-width="3.500" shape-rendering="auto"/>
<line x1="819.500" y1="498" x2="813" y2="562" stroke="#4a2410" stroke-width="1.300" stroke-dasharray="6,2" shape-rendering="auto"/><line x1="800" y1="527" x2="852" y2="527.500" stroke="#4a2410" stroke-width="1.200" shape-rendering="auto"/>
<path d="M360,676l0,-1M779,668l0,-6M853,670l1,-1M440,678l1,-5M137,695l0,-2M573,681l0,-2M556,672l0,-3M543,689l0,-5M174,695l0,-2M170,701l0,-6M609,685l1,-5M742,681l0,-4M340,703l0,-2M571,687l-1,-3M330,713l1,-1M226,685l1,-4M121,700l0,-5M374,683l-1,-4M145,678l-1,-2M674,669l-1,-2M327,685l0,-3M880,674l0,-6M503,676l0,-2M709,679l0,-4M228,687l0,-2M777,700l1,-2M918,688l0,-3M215,679l0,-2M98,708l0,-2M325,677l0,-5M601,678l0,-2M472,705l1,-5M423,683l1,-4M140,678l-1,-2M224,685l0,-1M88,681l0,-1M604,670l1,-2M213,682l0,-3M487,673l-1,-4M492,679l0,-2M719,694l0,-4M522,675l0,-5M211,693l0,-1M911,698l0,-2M852,675l0,-2M623,690l0,-2M777,694l0,-2M523,680l0,-1M753,681l0,-2M464,708l0,-3M155,678l0,-4M372,688l0,-6M491,694l0,-1M854,694l-1,-2M836,678l0,-3M762,706l-1,-3M425,710l0,-2M924,664l-1,-6M767,669l-1,-6M641,678l0,-5M106,707l0,-1M453,705l0,-2M300,682l0,-2M306,686l0,-2M854,675l1,-4M784,701l0,-2M528,670l0,-4M600,698l0,-2M207,696l0,-1M362,690l-1,-5M748,668l0,-5M297,681l-1,-1M560,698l-1,-1M362,712l0,-6M671,682l-1,-5M515,677l0,-5M864,700l-1,-2M203,678l0,-4M149,682l0,-1M651,698l0,-2M208,709l0,-4M716,669l0,-4M921,696l1,-2M925,676l0,-3M388,674l0,-3M372,687l1,-1M367,694l0,-5M183,712l0,-2M158,683l0,-2M724,698l1,-2M213,711l-1,-6M677,669l0,-1M446,673l0,-1M762,668l0,-2M310,676l0,-1M925,676l0,-2M124,702l0,-1M308,678l0,-2M535,675l0,-4M315,704l0,-2M100,703l0,-5M520,676l0,-4M642,691l1,-4M905,672l0,-2M376,704l1,-2M921,704l0,-2M147,703l1,-2M225,677l0,-3M592,694l-1,-1M244,682l0,-1M394,681l0,-5M293,712l0,-2M388,673l0,-3M487,687l0,-2M512,670l0,-2M209,695l0,-3M340,695l0,-1M641,694l1,-6M731,693l0,-4M327,695l0,-2M782,692l1,-5M705,698l0,-2M783,686l0,-2M114,680l0,-3M405,686l0,-1M615,693l0,-4M90,707l0,-5M643,669l0,-4M769,699l0,-2M282,697l-1,-4M799,667l0,-2M607,691l0,-1M367,696l0,-2M98,678l0,-2M670,692l0,-2M479,685l0,-1M350,675l0,-4M331,675l-1,-5M924,675l0,-2M577,672l0,-5M890,667l0,-5M834,691l-1,-2M843,681l0,-1M91,693l1,-4M342,676l1,-3M354,705l0,-1M720,699l0,-1M688,703l0,-2M401,684l0,-6M391,685l0,-2M324,674l0,-2M297,681l0,-5M247,685l0,-3M771,688l0,-5M693,668l-1,-3M605,672l-1,-2M129,713l0,-2M485,680l0,-2M710,707l1,-2M640,676l1,-5M188,698l0,-1M509,701l0,-5M469,680l1,-4M205,680l0,-1M375,674l0,-2M305,693l1,-1M410,699l1,-2M315,701l0,-4M571,680l0,-5M165,711l1,-3M631,682l0,-2M195,688l-1,-4M88,689l-1,-5M906,670l0,-1M217,692l-1,-1M159,705l0,-1M283,710l0,-2M615,686l0,-3M171,684l0,-6M414,677l0,-6M96,685l0,-4M895,687l-1,-2M531,688l1,-1M681,676l0,-1M507,694l0,-3M304,697l0,-3M503,696l0,-3M662,672l0,-2M260,713l0,-2M282,680l0,-2M889,680l0,-2M496,707l0,-1M864,665l0,-1M437,697l1,-2M466,697l0,-3M927,701l0,-3M244,712l0,-4M350,699l0,-3M460,673l0,-1M156,689l0,-1M408,701l1,-2M161,701l0,-2M543,684l0,-3M708,682l0,-3M771,695l1,-1M117,678l0,-1M252,676l0,-6M393,682l0,-6M308,700l0,-3M338,699l0,-6M108,683l-1,-4M891,676l1,-2M774,669l0,-4M95,713l0,-2M599,678l-1,-3M392,701l0,-1M417,675l0,-3M634,684l0,-5M223,688l0,-1M311,675l1,-1M507,696l0,-4M285,687l0,-6M717,700l0,-1M335,692l0,-3M709,672l0,-2M294,677l0,-6M362,685l0,-2M634,670l0,-4M174,691l-1,-2M857,665l0,-2M188,680l0,-6M871,675l-1,-2M595,698l0,-1M624,694l0,-3M119,686l0,-1M929,664l0,-2M777,678l0,-3M610,670l-1,-1M549,671l1,-1M647,671l0,-5M637,680l1,-2M920,688l0,-3M351,692l1,-3M438,705l0,-3M416,684l1,-1M847,678l1,-1M574,680l0,-2M100,695l0,-3M570,706l0,-5M210,683l0,-5M867,666l0,-4M341,705l-1,-1M352,694l0,-3M849,687l0,-2M610,690l-1,-2M242,680l0,-3M410,675l0,-2M122,695l0,-1M187,696l0,-5M634,677l1,-2M415,683l-1,-5M238,675l-1,-4M286,702l0,-4M770,678l0,-1M389,683l0,-4M122,680l0,-3M133,693l0,-3M109,678l0,-6M251,714l0,-4M893,701l0,-2M143,686l0,-2M360,694l0,-4M302,712l0,-4M586,690l0,-2M401,677l0,-3M623,676l1,-3M230,704l0,-1M623,679l0,-4M300,691l0,-3M310,714l0,-6M391,701l0,-4M236,702l0,-1M778,672l0,-6M705,695l0,-2M332,695l0,-3M842,668l0,-2M106,677l0,-3M177,686l1,-2M579,689l0,-2M613,684l0,-2M876,670l-1,-2M168,698l1,-2M771,706l0,-1M588,689l-1,-6M297,709l0,-1M535,682l0,-2M137,705l0,-1M207,680l1,-6M772,670l0,-2M340,674l0,-4M403,685l0,-4M712,681l0,-2M308,696l0,-1M838,702l0,-2M311,692l0,-3M336,710l0,-2M828,665l0,-2M796,670l0,-2M249,686l0,-6M407,705l-1,-5M485,688l0,-1M456,698l0,-6M752,678l0,-6M563,673l0,-1M182,697l0,-2M910,689l0,-1M204,698l0,-1M708,668l0,-6M255,712l0,-5M828,694l0,-3M295,679l0,-1M887,701l0,-1M489,673l0,-2M356,686l0,-1M304,681l0,-3M735,687l0,-4M608,669l0,-3M455,700l-1,-3M681,685l0,-2M571,677l0,-3M528,678l0,-1M380,674l-1,-2M586,708l0,-5M574,673l0,-2M507,673l-1,-1M751,692l0,-1M387,684l0,-3M443,694l0,-3M343,686l0,-5M407,706l-1,-2M194,696l0,-6M381,682l-1,-2M645,696l-1,-2M457,700l0,-6M194,690l0,-2M313,701l0,-6M697,707l0,-3M223,684l0,-2M909,691l0,-1M898,666l0,-3M916,694l1,-2M318,676l0,-1M261,686l0,-1M423,701l0,-2M478,674l1,-6M92,683l1,-3M800,690l0,-6M660,690l1,-4M351,695l1,-1M292,686l0,-2M803,681l1,-1M524,694l0,-2M743,678l0,-4M120,694l0,-2M525,672l-1,-6M543,696l0,-5M626,700l0,-5M433,709l0,-2M418,700l0,-1M624,675l1,-3M139,678l0,-3M576,671l1,-2M879,682l1,-2M477,675l0,-1M483,690l0,-2M385,695l-1,-3M926,692l-1,-2M386,705l1,-2M666,708l-1,-2M90,703l0,-2M294,682l-1,-4M448,694l0,-3M869,698l0,-1M785,702l0,-2M621,669l0,-1M889,688l0,-2M575,702l-1,-2M379,676l0,-3M601,694l0,-1M254,699l0,-5M712,681l0,-1M310,680l-1,-2M503,671l0,-4M677,674l0,-2M223,684l-1,-6M648,701l1,-3M440,710l0,-1M624,691l0,-1M601,693l0,-3M517,686l0,-2M267,687l0,-2M167,699l-1,-3M743,685l0,-2M454,684l0,-5M784,674l1,-4M368,712l0,-5M908,687l0,-1M249,700l0,-2M748,667l1,-5M547,671l0,-2M93,682l0,-4M752,703l1,-6M607,691l0,-6M266,698l0,-4M173,680l1,-1M740,703l0,-1M822,668l0,-2M814,670l0,-1M105,696l0,-6M507,687l1,-1M572,706l0,-4M99,688l0,-6M488,683l0,-1M630,673l0,-2M447,672l0,-1M271,677l0,-4M319,692l0,-4M865,675l0,-2M334,692l-1,-4M651,703l0,-1M97,678l0,-6M415,680l0,-6M894,697l0,-6M354,711l-1,-4M657,671l0,-1M891,668l-1,-3M412,701l0,-2M334,674l0,-6M820,692l0,-1M594,677l0,-3M405,696l0,-6M767,674l0,-1M309,686l0,-6M330,676l0,-6M318,706l-1,-5M380,674l-1,-5M759,671l0,-2M599,693l0,-4M867,685l1,-1M475,673l0,-3M284,694l0,-2M489,691l0,-2M249,679l0,-2M574,680l0,-5M295,710l0,-4M817,676l0,-4M219,695l0,-3M525,670l0,-1M921,698l0,-4M308,703l0,-3M884,693l0,-6M301,674l0,-2M406,673l0,-1M821,680l1,-1M864,690l0,-1M356,679l1,-1M241,707l0,-3M923,669l0,-1M880,665l0,-5M792,666l-1,-5M134,680l0,-1M657,676l-1,-6M726,669l0,-3M304,676l1,-4M229,681l0,-2M481,707l0,-1M869,670l0,-6M836,668l0,-4M867,676l0,-1M468,681l-1,-2M185,686l0,-3M707,671l0,-4M457,674l1,-3M295,674l0,-6M369,676l0,-4M355,708l0,-1M911,665l-1,-2M791,668l0,-2M451,678l0,-2M170,684l0,-2M788,706l0,-2M460,688l0,-5M461,701l0,-5M244,688l0,-3M321,678l0,-2M687,672l0,-1M836,692l0,-2M261,695l0,-2M258,676l1,-5M796,702l0,-5M370,705l0,-4M101,712l0,-4M822,672l0,-2M118,702l0,-6M387,709l0,-5M189,701l1,-3M573,705l0,-2M891,680l0,-5M534,688l0,-1M902,669l0,-2M174,682l0,-1M169,701l0,-2M102,697l-1,-6M528,695l0,-1M820,692l0,-1M191,691l0,-5M180,678l0,-2M813,668l-1,-6M716,671l1,-1M672,688l0,-6M421,709l0,-3M425,704l0,-3M774,699l0,-1M523,709l0,-3M820,689l0,-1M179,680l1,-3M257,698l0,-2M442,683l0,-4M769,701l0,-1M816,687l0,-6M616,699l0,-1M298,691l0,-3M888,672l0,-2M633,671l0,-6M159,696l-1,-2M192,678l1,-2M574,676l0,-1M795,687l0,-6M635,673l-1,-3M838,673l-1,-4M777,666l0,-3M246,693l1,-6M98,687l0,-2M556,685l0,-2M336,702l0,-2M598,679l1,-1M790,676l0,-1M920,688l1,-2M371,683l0,-2M779,683l0,-4M748,692l1,-2M821,665l0,-5M507,709l0,-6M439,701l0,-6M407,686l0,-4M696,675l1,-3M633,668l1,-4M461,675l0,-2M454,682l0,-2M779,675l0,-6M895,669l0,-3M109,684l0,-4M862,694l1,-5M523,687l1,-3M478,672l-1,-3M886,689l0,-5M171,687l0,-3M828,705l1,-4M458,693l0,-6M670,695l0,-1M393,683l0,-1M519,672l0,-2M778,707l0,-3M529,701l0,-2M435,673l0,-6M385,713l1,-1M97,677l0,-5M860,677l0,-1M650,673l0,-4M821,701l0,-5M571,682l0,-1M220,703l0,-1M172,680l-1,-5M781,687l0,-1M664,687l0,-2M385,676l0,-2M811,704l0,-1M249,696l0,-1M273,686l-1,-1M133,683l0,-2M222,695l0,-2M93,710l0,-4M440,678l0,-4M292,685l0,-6M436,683l0,-4M755,672l0,-2M389,677l1,-2M560,672l1,-5M370,695l1,-1M783,676l1,-2M248,682l1,-2M117,700l0,-3M291,677l0,-2M546,699l-1,-5M481,701l0,-2M397,677l1,-3M617,688l-1,-2M513,676l0,-4M881,706l-1,-6M582,680l1,-2M600,674l0,-1M544,677l0,-3M641,687l0,-2M416,674l0,-2M358,696l0,-1M561,680l0,-5M250,701l0,-1M330,704l0,-3M387,705l0,-4M876,668l0,-3M843,665l0,-4M929,675l0,-1M333,680l0,-6M687,668l0,-1M450,699l1,-2M709,686l0,-2M568,696l1,-2M652,688l0,-1M790,695l0,-2M824,685l0,-1M661,668l0,-3M742,676l1,-1M672,679l0,-6M324,675l-1,-3M871,690l0,-4M657,673l0,-5M500,675l0,-5M234,679l0,-2M298,675l0,-3M434,676l0,-2M202,701l0,-4M682,668l0,-4M875,674l0,-2M832,668l0,-6M368,703l1,-5M728,671l-1,-2M794,678l0,-2M669,668l0,-4M124,711l0,-2M181,684l0,-1M361,687l0,-3M229,676l-1,-1M923,692l0,-1M913,683l-1,-1M893,680l0,-5M94,713l0,-2M637,670l0,-1M740,699l0,-2M244,697l0,-2M748,699l0,-6M407,695l0,-3M281,677l0,-3M289,675l1,-6M850,703l1,-4M508,674l0,-2M207,681l-1,-2M624,680l-1,-1M491,676l0,-3M114,698l1,-5M208,677l1,-1M837,666l0,-1M849,668l0,-2M461,690l0,-3M482,689l-1,-5M448,689l1,-2M897,686l0,-1M600,677l1,-6M890,680l0,-2M816,683l0,-1M275,701l0,-1M644,679l1,-6M391,678l1,-4M307,679l0,-2M274,706l0,-1M534,676l0,-4M554,675l0,-6M707,703l0,-6M804,690l0,-4M815,684l0,-1M475,695l0,-5M903,668l0,-4M203,704l1,-1M287,685l0,-1M475,673l1,-2M852,666l0,-2M860,699l0,-2M715,677l0,-1M191,686l0,-5M695,668l0,-6M171,694l0,-6M116,712l0,-2M386,697l-1,-1M183,676l0,-1M762,670l0,-5M823,689l0,-2M541,695l-1,-2M99,687l-1,-2M510,704l0,-1M241,706l1,-6M797,705l1,-4M280,712l0,-5M391,690l0,-2M584,670l0,-2M700,677l1,-4M877,673l-1,-3M369,673l0,-4M619,695l0,-2M411,673l0,-2M567,687l0,-2M858,701l0,-1M739,689l0,-1M754,697l0,-2M661,676l0,-3M516,692l1,-3M369,698l-1,-3M512,705l0,-2M214,680l1,-4M463,690l0,-2M582,672l0,-2M699,686l0,-3M863,685l0,-1M344,683l0,-4M905,689l-1,-1M356,677l0,-2M726,689l0,-2M271,686l0,-2M815,688l0,-2M705,706l0,-6M154,706l0,-6M693,667l0,-2M626,705l0,-2M363,700l1,-4M601,699l0,-2M814,696l0,-1M741,707l0,-3M879,699l0,-1M563,710l1,-1M604,695l0,-3M166,680l0,-2M389,683l0,-3M641,689l0,-3M711,674l0,-4M741,675l-1,-5M558,680l0,-5M199,676l0,-4M639,697l0,-3M921,669l0,-1M613,671l0,-5M555,674l0,-6M709,703l0,-2M383,698l-1,-4M267,710l-1,-3M266,704l0,-1M643,668l0,-3M138,695l1,-3M883,686l0,-2M300,681l0,-3M282,679l0,-3M339,713l0,-2M489,708l0,-2M780,673l0,-3M496,705l0,-2M662,688l0,-4M575,704l0,-2M126,705l0,-4M454,674l0,-2M765,669l0,-1M855,668l0,-3M720,682l0,-3M436,694l0,-3M912,664l0,-2M754,691l0,-1M513,676l0,-3M701,668l0,-3M827,667l0,-4M530,670l0,-2M621,687l0,-1M794,705l0,-1M905,697l0,-2M317,678l0,-2M146,677l0,-5M431,690l0,-3M96,701l0,-4M550,695l1,-2M443,689l0,-3M413,683l0,-3M844,687l0,-2M672,695l0,-2M646,670l0,-6M852,665l0,-5M664,682l-1,-3M906,664l0,-4M586,710l1,-2M387,674l0,-5M603,693l0,-3M617,687l0,-2M308,706l-1,-3M568,710l0,-1M529,687l0,-3M655,671l0,-4M627,700l0,-1M409,704l0,-3M433,697l0,-3M395,696l0,-5M469,673l0,-3M927,689l-1,-4M703,671l0,-5M92,680l0,-4M612,686l0,-3M102,682l0,-6M136,681l0,-5M860,671l-1,-2M164,698l0,-1M196,713l0,-2M863,691l0,-3M123,704l1,-3M633,699l0,-3M412,691l0,-6M911,697l0,-6M141,681l0,-1M724,678l1,-5M506,706l0,-1M587,684l1,-4M437,686l-1,-1M422,675l0,-1M711,679l0,-1M554,698l0,-4M163,708l0,-6M173,678l-1,-2M134,700l-1,-3M814,684l0,-3M928,695l0,-2M369,689l0,-1M920,671l0,-2M351,680l1,-2M518,683l0,-1M344,706l0,-3M344,676l0,-2M873,688l0,-6M395,702l-1,-2M862,683l0,-1M95,679l0,-6M117,682l0,-4M256,680l-1,-6M429,698l0,-2M136,690l0,-1M203,709l-1,-6M239,711l0,-5M507,694l0,-2M538,673l0,-2M480,676l0,-1M437,695l-1,-2M665,671l0,-1M123,708l0,-2M824,696l0,-5M348,680l0,-5M215,705l1,-2M908,673l0,-2M276,692l0,-1M479,697l0,-3M659,670l0,-3M641,673l0,-5M332,683l0,-4M256,682l0,-2M257,689l0,-2M115,697l0,-1M251,678l0,-2M232,685l0,-4M365,683l0,-1M769,693l0,-4M716,669l1,-2M476,671l0,-5M435,697l0,-3M152,702l0,-2M230,712l0,-3M797,700l0,-4M213,677l0,-2M216,682l0,-5M361,679l0,-6M514,681l0,-2M427,677l0,-2M699,685l0,-2M100,714l0,-4M668,673l0,-2M796,707l1,-3M613,671l0,-6M159,695l0,-2M589,699l0,-1M149,686l0,-1M268,703l0,-2M376,703l0,-4M97,714l1,-3M115,706l0,-2M215,685l0,-2M254,680l0,-3M927,694l0,-4M506,700l0,-1M255,696l1,-3M165,702l0,-3M764,682l0,-4M306,698l0,-2M715,699l0,-6M454,703l0,-5M717,687l0,-1M903,694l0,-2M290,694l0,-5M826,685l1,-1M646,680l1,-3M430,673l1,-3M755,666l0,-4M888,699l1,-4M433,680l0,-2M547,671l-1,-3M609,677l0,-1M245,709l0,-3M189,700l1,-1M780,670l0,-2M894,675l0,-2M837,686l0,-3M508,709l0,-5M809,705l0,-3M88,681l-1,-2M563,693l0,-3M916,691l1,-5M201,703l1,-2M151,698l0,-4M894,675l0,-3M851,681l0,-3M135,708l1,-1M464,699l-1,-2M117,686l0,-2M890,700l0,-2M582,689l1,-1M234,695l0,-2M333,691l1,-3M634,699l-1,-3M898,690l0,-2M224,694l0,-1M840,670l0,-1M347,690l0,-2M582,709l0,-3M317,708l0,-4M610,706l0,-3M661,678l1,-3M755,681l0,-1M867,686l1,-5M624,698l0,-3M216,703l1,-4M721,674l1,-3M533,678l0,-1M466,671l0,-5M385,710l0,-2M833,700l1,-1M790,692l0,-2M630,708l1,-1M420,709l1,-3M418,702l0,-3M687,670l1,-5M651,704l0,-2M373,674l0,-3M510,703l1,-2M427,691l0,-2M215,699l0,-2M844,701l0,-3M198,701l0,-3M687,696l0,-6M599,705l0,-2M390,691l0,-1M107,694l0,-1M271,688l-1,-2M319,675l0,-4M121,708l-1,-1M277,696l0,-3M534,676l0,-5M325,712l0,-6M275,678l0,-5M444,673l0,-2M580,681l1,-5M278,708l0,-1M897,673l0,-2M628,688l-1,-3M904,699l-1,-6M248,696l1,-1M227,703l0,-1M457,676l0,-2M257,702l0,-2M862,691l0,-1M385,685l0,-5M557,691l0,-6M922,672l0,-1M670,681l-1,-1M738,676l0,-2M742,681l0,-1M757,681l0,-2M532,676l0,-3M385,695l0,-2M883,705l1,-3M223,710l0,-3M204,678l1,-6M111,707l-1,-1M745,671l0,-6M810,675l-1,-5M495,693l0,-2M292,709l0,-3M170,710l-1,-2M472,691l0,-4M568,696l0,-4M424,696l-1,-2M670,683l0,-2M853,685l0,-1M761,702l1,-1M564,697l0,-2M292,709l0,-2M120,678l0,-2M740,667l1,-5M309,677l-1,-1M725,669l0,-1M208,692l0,-6M177,705l0,-3M148,677l0,-1M682,691l0,-6M472,695l0,-5M108,708l0,-4M190,698l1,-2M915,685l0,-1M658,669l0,-2M163,683l0,-2M212,696l0,-3M93,679l0,-1M525,684l0,-3M859,692l0,-1M792,692l0,-1M803,679l0,-1M608,677l0,-2M300,682l0,-3M361,675l0,-4M913,687l0,-4M318,680l0,-3M374,690l0,-3M89,705l0,-2M757,684l0,-1M783,674l0,-3M142,679l0,-4M266,675l0,-5M877,677l0,-5M633,674l0,-1M451,674l-1,-2M605,672l1,-2M297,680l0,-1M669,673l0,-2M640,689l0,-3M153,703l0,-5M149,678l0,-5M696,690l0,-5M863,679l0,-1M343,685l-1,-2M920,699l0,-4M359,678l0,-3M177,681l0,-3M321,674l0,-2M849,668l0,-6M644,672l-1,-2M169,715l0,-3M637,688l0,-2M142,677l0,-2M394,698l0,-2M751,673l0,-3M528,672l0,-2M328,684l0,-1M634,703l0,-3M290,709l0,-2M130,700l0,-3M325,688l0,-4M180,694l0,-4M428,687l0,-2M446,672l0,-2M312,687l0,-2M555,671l-1,-2M714,686l0,-3M138,690l0,-1M527,687l0,-3M173,691l-1,-4M749,669l0,-4M170,683l0,-3M188,715l0,-4M239,675l0,-5M629,693l0,-1M738,690l0,-2M210,705l0,-3M809,676l0,-2M101,691l-1,-1M270,675l0,-4M794,674l0,-3M879,676l0,-2M391,688l-1,-1M402,705l0,-4M611,674l0,-4M348,702l0,-2M908,692l1,-1M237,687l0,-1M736,673l0,-1M599,676l-1,-4M561,695l0,-2M290,676l0,-3M854,706l0,-2M834,666l1,-2M229,695l1,-4M301,693l0,-2M893,671l0,-3M131,712l0,-1M849,666l0,-2M441,689l0,-2M463,687l0,-5M844,704l1,-2M152,711l1,-6M240,699l0,-2M434,710l0,-2M678,668l0,-4M653,698l-1,-1M488,695l-1,-2M895,694l1,-2M162,715l1,-5M425,675l0,-2M707,677l0,-4M195,681l0,-2M183,692l1,-3M632,683l0,-4M573,680l0,-3M235,690l0,-1M419,674l0,-2M622,694l0,-2M733,675l0,-2M779,687l0,-6M254,675l1,-5M698,674l0,-1M792,667l0,-2M234,679l0,-2M108,679l0,-1M213,685l0,-5M357,685l0,-4M368,709l0,-2M311,675l0,-1M198,709l0,-3M510,673l0,-6M720,699l1,-3M336,674l0,-2M763,668l0,-6M249,700l0,-4M612,700l1,-4M204,680l0,-6M178,698l0,-2M510,687l0,-3M114,703l0,-2M266,700l0,-4M847,670l0,-2M198,677l0,-4M784,692l1,-2M353,699l0,-1M163,677l0,-5M215,712l-1,-2M113,686l0,-5M665,683l0,-2M177,677l1,-3M495,677l0,-5M466,704l0,-3M538,699l0,-3M176,690l0,-2M119,716l0,-5M141,701l0,-1M641,701l1,-3M525,673l0,-1M114,712l0,-2M677,676l1,-5M230,679l0,-3M393,707l0,-4M165,713l-1,-3M278,678l-1,-2M419,677l0,-2M858,680l0,-5M763,666l-1,-5M773,691l0,-6M351,699l0,-3M643,669l0,-1M572,669l0,-2M845,704l0,-3M802,697l0,-2M341,694l1,-3M327,711l1,-1M724,696l0,-6M775,689l0,-1M723,698l0,-2M408,704l0,-2M541,679l0,-1M842,669l0,-3M809,704l0,-5M756,699l0,-4M483,685l0,-2M391,673l0,-1M834,701l0,-1M399,693l0,-4M255,689l0,-3M763,705l-1,-2M356,683l0,-2M570,671l0,-6M495,683l0,-2M263,692l0,-1M476,690l0,-1M449,673l0,-5M778,696l0,-3M275,701l0,-1M396,710l0,-3M408,698l0,-3M363,713l0,-5M501,698l0,-1M597,680l0,-5M242,710l0,-5M819,676l0,-1M513,706l-1,-2M873,683l0,-2M619,699l0,-3M594,676l0,-2M441,688l0,-4M165,676l0,-3M718,673l0,-2M523,674l0,-6M849,670l0,-6M718,693l0,-2M791,679l0,-5M499,671l0,-1M843,684l0,-3M357,677l0,-2M431,698l0,-2M223,687l1,-6M343,677l-1,-2M159,681l0,-3M512,675l-1,-4M735,687l0,-4M484,675l0,-6M509,676l1,-3M902,676l1,-3M370,698l0,-3M479,703l0,-5M123,706l0,-4M516,696l1,-3M609,672l0,-1M615,693l0,-3M584,693l0,-3M550,682l0,-2M185,710l0,-1M767,680l0,-2M527,670l0,-5M626,684l0,-3M413,693l0,-2M399,684l0,-3M320,683l0,-4M878,675l0,-1M264,701l0,-2M349,678l0,-3M190,714l0,-1M551,706l0,-1M453,676l1,-4M443,693l0,-2M910,664l0,-1M192,676l0,-2M478,673l0,-2M654,707l0,-3M912,677l1,-3M301,680l0,-1M227,710l0,-3M463,693l-1,-1M548,704l-1,-1M457,672l1,-3M518,673l0,-1M506,695l0,-2M509,707l0,-5M799,676l1,-2M701,680l0,-4M354,684l0,-2M755,696l0,-1M355,701l0,-2M221,708l0,-4M810,706l0,-4M213,703l1,-6M851,685l0,-3M161,705l1,-1M320,676l-1,-3M831,696l-1,-1M634,670l0,-4M268,697l0,-2M261,691l1,-5M735,692l-1,-2M629,677l0,-4M127,708l0,-2M594,703l0,-2M624,679l0,-2M774,666l0,-4M161,708l0,-1M479,686l0,-1M376,709l0,-2M631,697l0,-2M371,676l-1,-2M810,671l0,-2M274,710l0,-6M905,693l-1,-3M266,687l0,-4M662,695l-1,-2M492,688l0,-2M223,699l0,-5M429,675l-1,-2M483,708l0,-6M171,692l0,-6M224,709l1,-3M896,705l-1,-2M578,708l0,-3M352,673l-1,-2M192,683l0,-3M492,708l0,-2M391,693l0,-2M904,670l0,-6M442,677l0,-1M521,694l0,-2M664,705l0,-2M312,713l0,-1M351,692l1,-1M382,698l0,-5M99,682l0,-2M173,712l0,-2M656,679l0,-1M590,694l0,-3M786,701l0,-5M448,705l0,-1M924,705l1,-6M223,701l0,-5M390,708l0,-2M224,678l0,-1M222,691l0,-6M559,682l0,-5M700,673l0,-2M867,664l0,-3M739,699l1,-6M449,686l0,-1M909,705l-1,-1M919,670l0,-1M254,681l0,-3M373,674l0,-2M519,708l0,-2M232,688l1,-1M869,685l0,-4M921,691l0,-2M327,674l0,-1M526,698l1,-2M229,698l0,-3M644,670l0,-4M678,691l0,-1M431,689l0,-2M370,680l0,-3M119,689l0,-3M219,677l0,-5M922,701l1,-1M510,686l0,-2M651,684l0,-4M141,696l0,-4M206,691l0,-2M675,687l0,-1M183,685l0,-1M578,696l0,-3M673,678l0,-2M911,677l0,-1M165,702l0,-2M642,675l0,-1M768,668l0,-2M216,709l0,-1M926,672l-1,-5M904,687l0,-6M349,678l0,-3M402,689l0,-6M609,692l0,-2M440,695l0,-2M535,677l0,-4M523,676l1,-5M546,678l0,-1M494,697l-1,-2M813,691l0,-4M160,686l0,-2M915,677l0,-2M671,675l0,-1M391,673l0,-6M765,672l-1,-3M179,705l-1,-2M173,681l0,-4M687,703l-1,-3M330,677l0,-2M688,678l0,-1M367,705l1,-1M445,675l0,-3M181,683l1,-5M925,705l1,-1M416,683l0,-1M184,685l0,-2M613,673l0,-1M335,678l0,-2M484,700l0,-3M118,686l0,-6M517,673l-1,-2M350,686l0,-3M847,667l0,-3M638,681l0,-3M405,673l0,-5M314,702l-1,-4M919,664l-1,-3M279,696l-1,-6M549,681l0,-1M726,695l0,-1M476,676l0,-1M166,678l0,-3M452,688l0,-2M522,710l0,-2M517,686l0,-3M813,670l0,-3M801,686l0,-5M327,675l0,-3M396,712l0,-3M364,705l0,-3M439,710l0,-3M426,675l-1,-2M391,679l-1,-2M226,711l0,-1M405,707l1,-3M656,684l0,-4M544,671l0,-2M305,696l0,-2M642,702l0,-2M691,694l0,-1M318,682l0,-2M653,696l0,-3M722,677l0,-4M780,689l0,-1M603,669l0,-5M313,706l0,-2M101,711l0,-4M787,691l0,-5M814,670l0,-3M198,686l0,-1M613,671l0,-2M653,676l0,-1M921,677l0,-2M770,693l0,-2M165,712l-1,-5M603,702l1,-2M676,682l0,-4M878,670l0,-2M200,684l0,-1M167,689l-1,-3M517,686l0,-1M425,675l1,-4M219,703l0,-3M485,687l0,-2M385,703l0,-1M320,695l0,-4M405,692l0,-2M456,671l0,-2M755,669l0,-5M677,671l1,-1M774,680l0,-3M801,669l0,-2M355,695l1,-3M321,675l0,-6M223,695l-1,-2M631,684l0,-1M913,698l0,-4M836,688l1,-1M271,703l0,-2M879,668l0,-3M175,706l0,-2M217,693l0,-1M794,700l0,-1M297,675l0,-2M309,678l0,-1M860,670l1,-2M184,681l0,-1M365,675l0,-4M926,668l0,-1M725,679l1,-5M276,687l-1,-6M657,688l-1,-5M319,705l0,-3M644,687l0,-4M926,680l0,-1M664,703l0,-3M99,699l0,-2M483,674l1,-2M688,694l0,-2M629,692l0,-2M409,698l0,-5M371,675l0,-1M124,685l0,-5M185,702l0,-1M109,703l0,-3M606,691l0,-3M187,690l-1,-4M410,685l1,-2M903,673l1,-3M525,689l0,-1M636,675l0,-2M458,699l0,-2M216,692l0,-3M878,700l0,-2M560,682l-1,-1M646,698l-1,-6M686,668l1,-1M341,699l1,-1M394,702l0,-1M110,693l0,-1M553,690l0,-1M331,712l0,-4M581,678l0,-1M545,693l0,-2M814,667l0,-1M582,696l-1,-2M331,693l0,-1M472,680l0,-5M625,685l-1,-1M374,683l0,-3M693,678l0,-3M589,690l1,-2M882,671l0,-6M201,693l0,-2M154,709l0,-2M306,695l1,-2M477,697l0,-1M644,670l1,-4M124,681l1,-3M664,672l0,-5M426,691l1,-5M246,712l0,-5M923,678l0,-1M663,669l0,-5M789,701l-1,-2M488,679l0,-3M799,690l0,-2M219,694l-1,-2M371,675l0,-2M691,673l0,-3M342,680l0,-3M887,669l0,-4M458,693l0,-1M896,670l0,-2M108,679l0,-3M295,682l0,-1M571,670l0,-1M617,689l0,-4M772,669l-1,-5M311,685l0,-2M684,687l1,-3M864,696l0,-6M127,693l0,-5M120,683l0,-2M877,694l-1,-4M476,699l0,-3M667,672l0,-1M713,691l0,-2M202,691l0,-3M887,706l-1,-4M755,689l0,-2M234,676l0,-4M103,692l0,-3M436,704l1,-1M288,682l1,-4M420,694l0,-5M359,694l0,-3M274,714l0,-1M797,699l-1,-4M901,697l1,-6M576,669l0,-3M432,710l1,-4M175,678l-1,-1M703,698l0,-6M185,696l0,-2M597,682l0,-6M650,668l0,-4M383,687l0,-1M617,689l0,-1M346,679l1,-6M857,684l1,-1M475,689l0,-6M612,684l0,-5M681,706l0,-1M357,707l0,-1M114,699l0,-2M704,700l0,-5M605,672l0,-1M457,706l0,-3M764,670l0,-5M875,664l-1,-2M132,679l1,-1M791,690l0,-1M365,676l0,-2M544,670l-1,-1M515,673l0,-1M835,668l0,-2M847,666l0,-2M844,669l0,-4M911,666l0,-2M682,679l-1,-2M320,680l0,-5M201,708l0,-2M672,668l0,-1M743,695l0,-2M170,683l0,-4M460,673l0,-3M224,676l0,-1M853,677l0,-2M470,672l-1,-3M186,687l0,-2M582,683l-1,-3M535,695l1,-2M144,689l0,-2M268,683l0,-2M815,688l0,-4M407,708l-1,-1M140,690l0,-3M504,682l0,-2M518,675l-1,-1M829,698l1,-3M627,687l1,-1M643,677l0,-5M330,687l0,-4M856,701l-1,-6M603,690l0,-2M627,703l0,-3M319,691l0,-4M825,700l0,-3M482,683l0,-2M162,715l0,-2M403,685l-1,-6M621,679l0,-1M145,693l-1,-6M727,705l1,-3M620,675l1,-6M365,684l-1,-4M119,693l0,-5M645,699l0,-1M338,675l0,-2M507,678l1,-5M536,671l0,-1M650,693l0,-3M861,696l0,-2M144,695l0,-3M192,677l0,-3M813,677l0,-2M463,677l-1,-2M240,705l0,-4M727,670l0,-3M248,714l0,-2M625,670l1,-3M282,706l0,-1M462,705l0,-3M508,690l0,-2M263,696l-1,-5M570,700l0,-3M918,664l1,-1M618,691l0,-4M454,694l0,-6M500,671l0,-2M485,671l0,-2M648,697l0,-4M328,689l0,-2M919,676l0,-1M337,709l0,-2M233,701l0,-1M720,670l0,-1M299,690l-1,-2M878,672l0,-5M302,711l0,-1M365,682l1,-2M309,683l0,-2M99,712l0,-2M266,677l0,-3M188,680l0,-2M574,683l0,-2M530,699l0,-1M442,693l0,-2M488,680l0,-2M833,686l0,-1M867,700l0,-1M677,674l-1,-5M383,688l0,-1M648,674l-1,-5M246,700l0,-1M318,676l0,-2M890,686l0,-5M812,668l0,-2M483,708l1,-3M262,703l-1,-1M838,670l0,-5M668,682l0,-2M371,676l0,-2M392,674l0,-1M338,695l-1,-4M315,683l0,-5M245,679l0,-2M658,681l0,-1M533,703l0,-1M101,713l0,-4M319,674l0,-6M532,677l0,-4M710,672l0,-2M843,689l0,-6M198,688l1,-1M440,672l-1,-1M891,697l1,-1M673,684l0,-4M210,692l1,-2M322,675l-1,-1M868,675l0,-1M920,669l0,-1M364,681l0,-1M440,672l-1,-4M820,689l1,-2M341,700l0,-2M555,690l0,-4M123,695l0,-2M911,666l-1,-2M177,702l0,-3M863,688l0,-2M503,699l0,-6M196,688l0,-3M451,690l1,-3M212,682l0,-2M458,680l1,-1M505,674l0,-1M119,695l0,-2M878,672l0,-4M854,701l0,-2M465,703l-1,-4M414,678l0,-3M382,703l0,-4M903,677l0,-2M698,681l-1,-6M751,704l0,-6M171,696l1,-3M298,710l0,-1M458,677l0,-3M458,702l0,-2M902,691l0,-1M822,665l1,-2M876,668l0,-5M797,680l0,-3M232,683l0,-6M846,682l0,-2M464,698l0,-2M678,673l0,-6M582,683l0,-2M234,706l1,-2M806,706l0,-2M848,678l0,-2M911,681l1,-2M913,696l0,-2M928,695l0,-5M203,698l0,-5M90,703l0,-3M146,683l0,-2M780,684l0,-3M917,696l0,-3M675,703l0,-1M107,696l0,-5M780,686l0,-3M291,713l-1,-3M126,716l0,-2M422,701l0,-5M685,695l0,-6M325,681l0,-1M917,664l1,-6M382,677l0,-3M871,671l0,-2M239,708l0,-1M113,687l-1,-5M202,713l-1,-3M227,686l0,-1M635,701l0,-1M746,669l0,-2M514,674l0,-3M544,678l0,-2M466,685l0,-2M343,676l0,-3M427,702l0,-1M598,683l0,-1M565,690l0,-2M359,685l0,-5M172,701l0,-3M355,676l0,-2M400,682l-1,-2M475,702l0,-3M358,689l0,-3M385,697l0,-3M727,685l-1,-3M318,708l0,-2M672,691l0,-3M121,713l0,-2M433,690l0,-1M862,666l-1,-2M627,699l0,-1M131,677l0,-2M405,706l0,-2M805,699l1,-6M903,695l0,-1M660,676l0,-4M394,707l-1,-6M196,696l0,-5M896,664l0,-4M95,692l0,-3M565,670l0,-4M858,680l1,-1M359,680l0,-4M462,689l-1,-5M576,687l0,-5M497,703l1,-2M151,679l0,-3M544,706l0,-2M274,680l1,-1M318,675l1,-5M341,697l1,-5M590,677l0,-6M484,685l1,-2M121,691l0,-6M244,708l-1,-1M818,671l0,-3M364,692l1,-3M591,671l0,-3M853,674l0,-2M236,713l0,-6M476,711l0,-3M876,666l0,-3M928,681l0,-3M538,671l0,-5M674,690l1,-1M826,672l0,-1M438,709l0,-2M397,692l-1,-2M168,712l0,-1M381,676l-1,-1M466,677l0,-2M875,674l0,-4M432,690l0,-2M811,666l0,-5M211,711l0,-4M243,687l0,-6M449,672l0,-1M195,689l0,-6M689,708l0,-1M357,674l0,-2M291,676l0,-4M872,687l0,-2M281,676l0,-6M361,681l0,-4M757,681l0,-2M408,686l0,-5M660,670l-1,-5M176,703l0,-3M158,700l-1,-3M910,675l1,-2M505,707l0,-2M842,706l0,-5M364,678l0,-2M463,702l-1,-3M455,694l0,-2M279,706l0,-3M147,679l-1,-2M618,706l0,-4M427,691l1,-5M246,714l0,-2M724,677l0,-3M389,694l0,-5M257,710l0,-2M714,700l0,-1M648,668l0,-1M744,678l1,-5M716,677l-1,-1M207,676l0,-4M568,698l-1,-5M104,687l0,-3M144,715l0,-4M529,703l0,-4M754,669l1,-1M166,708l0,-5M421,677l0,-3M667,685l0,-6M919,693l0,-1M236,681l0,-2M928,675l0,-1M454,674l0,-4M678,685l0,-2M913,669l0,-4M348,705l0,-3M431,691l0,-1M169,684l-1,-1M129,702l0,-6M261,700l0,-6M610,681l0,-2M378,695l-1,-3M873,668l-1,-2M137,685l0,-5M493,707l0,-6M634,695l0,-5M149,716l0,-2M223,679l0,-5M395,703l0,-4M773,691l0,-3M437,682l0,-3M104,709l-1,-6M645,691l-1,-1M472,676l0,-4M190,692l0,-5M92,682l0,-5M617,690l0,-3M641,673l0,-6M151,704l-1,-2M379,677l0,-3M876,671l0,-6M654,674l1,-3M172,705l0,-2M202,683l0,-2M503,709l0,-2M243,686l0,-4M672,677l0,-1M141,713l0,-1M655,687l0,-6M176,687l1,-6M533,680l1,-3M559,710l0,-2M905,693l0,-2M566,683l1,-2M745,672l-1,-1M750,679l0,-2M921,705l-1,-2M674,668l0,-4M509,693l0,-2M339,689l0,-1M830,679l-1,-3M509,688l0,-3M474,693l0,-1M324,683l0,-3M713,683l0,-1M199,680l0,-3M424,683l-1,-6M579,686l0,-1M369,673l0,-2M845,673l-1,-3M326,709l0,-3M320,708l-1,-2M316,689l0,-5M885,679l1,-1M513,695l0,-2M186,710l-1,-3M773,681l0,-4M305,677l0,-4M129,680l-1,-2M814,669l0,-4M482,673l0,-2M516,691l0,-1M588,670l0,-2M630,690l-1,-6M200,676l0,-2M348,705l0,-1M917,665l0,-3M466,678l0,-1M295,713l-1,-2M228,684l1,-3M749,671l1,-2M97,698l0,-1M719,680l0,-2M711,669l0,-2M360,696l0,-3M170,701l0,-5M542,672l-1,-6M792,667l0,-3M189,678l0,-1M309,696l0,-1M815,668l0,-4M592,671l0,-2M91,680l0,-1M153,680l0,-6M264,710l0,-1M843,684l0,-6M240,679l0,-3M183,681l0,-1M711,675l1,-3M388,711l0,-6M146,690l0,-1M659,682l1,-3M240,694l-1,-3M98,681l0,-5M352,693l0,-4M331,680l0,-5M536,675l0,-4M387,679l0,-2M296,675l0,-6M109,711l0,-2M607,676l0,-2M406,678l-1,-1M580,671l0,-2M810,674l-1,-6M866,683l-1,-3M102,687l-1,-1M133,714l0,-3M358,711l0,-1M516,685l0,-2M161,677l0,-3M637,684l1,-1M468,703l0,-6M125,679l0,-1M250,707l0,-1M478,702l0,-3M241,694l0,-3M187,712l-1,-6M825,667l0,-6M240,684l-1,-2M686,703l0,-2M734,668l1,-6M876,680l0,-1M680,671l0,-5M502,680l0,-2M475,678l0,-3M689,673l0,-2M495,694l0,-1M490,672l0,-2M160,691l0,-3M929,702l-1,-3M762,671l0,-6M149,691l0,-2M805,685l-1,-5M502,682l0,-5M656,679l0,-2M638,672l0,-2M457,674l0,-2M336,704l0,-2M97,688l0,-5M731,686l-1,-2M454,688l0,-4M132,678l0,-2M506,677l0,-2M375,710l0,-3M596,674l0,-1M332,691l-1,-1M729,677l0,-2M694,688l0,-2M661,693l1,-2M918,672l0,-3M841,674l0,-1M502,675l-1,-3M927,664l0,-6M139,695l0,-5M197,709l0,-3M885,691l-1,-5M782,697l0,-5M818,666l0,-4M332,713l0,-1M139,686l0,-1M390,684l0,-1M618,682l0,-4M638,693l0,-2M211,691l1,-3M124,689l0,-2M910,682l1,-2M179,690l0,-3M426,689l0,-2M890,668l0,-2M250,684l0,-3M240,712l0,-3M355,690l-1,-2M434,697l0,-2M472,690l1,-6M443,679l0,-4M382,693l0,-3M852,671l0,-2M478,696l0,-6M158,678l1,-4M817,694l-1,-5M710,700l0,-4M186,677l0,-3M815,676l0,-3M105,710l0,-1M893,704l0,-4M793,666l0,-2M909,698l0,-6M609,682l0,-3M650,684l0,-2M324,686l0,-6M784,689l0,-1M263,697l0,-5M135,680l0,-5M404,689l0,-2M283,696l0,-1M913,682l0,-3M521,679l0,-3M441,688l1,-1M831,685l0,-3M327,678l0,-3M553,674l0,-1M707,671l0,-6M415,704l0,-2M922,687l0,-5M99,715l0,-4M268,712l0,-1M190,705l-1,-6M272,699l1,-2M668,689l0,-3M482,672l0,-3M308,709l0,-1M372,704l-1,-4M872,672l0,-3M114,677l0,-4M534,673l0,-1M165,687l0,-3M553,708l0,-5M542,684l0,-3M668,670l0,-4M545,680l0,-1M531,698l0,-6M393,687l-1,-2M209,690l0,-2M602,709l-1,-2M437,703l1,-4M99,689l1,-4M682,678l0,-4M268,684l0,-5M895,669l0,-1M260,678l0,-1M123,684l0,-5M234,683l0,-4M791,668l0,-5M633,670l-1,-5M348,700l0,-6M853,686l1,-2M244,700l0,-2M534,671l0,-4M732,674l1,-6M310,675l0,-2M490,701l0,-1M702,694l0,-3M766,669l0,-1M674,669l0,-2M93,680l0,-3M159,691l-1,-3M709,683l0,-5M232,711l0,-2M231,684l0,-2M369,673l0,-1M570,701l0,-1M801,682l1,-2M586,708l0,-2M277,705l0,-1M619,687l0,-1M93,694l0,-5M925,667l0,-6M499,674l0,-4M717,667l0,-2M554,670l-1,-1M483,699l-1,-5M149,707l0,-2M310,676l0,-3M147,708l0,-2M763,691l1,-4M847,696l0,-3M706,691l-1,-3M523,688l-1,-2M799,699l0,-2M517,690l0,-5M860,673l0,-3M382,674l0,-2M470,674l1,-2M818,672l0,-3M534,694l0,-5M661,670l0,-1M436,673l0,-2M722,693l0,-5M699,668l0,-1M669,677l0,-2M765,680l0,-2M165,712l0,-1M556,672l0,-2M836,668l0,-3M607,680l0,-6M334,714l0,-3M906,699l0,-1M666,705l0,-6M330,684l0,-3M177,710l1,-6M362,676l-1,-6M325,681l0,-2M542,670l0,-2M681,668l0,-5M923,672l0,-1M270,714l0,-6M795,685l0,-2M516,707l0,-2M676,702l0,-6M591,685l0,-2M180,688l0,-4M189,686l0,-2M580,682l0,-2M654,674l0,-4M413,712l0,-6M139,711l0,-5M585,685l0,-5M321,690l-1,-2M92,694l0,-2M532,695l0,-6M475,687l0,-4M522,700l0,-3M714,679l0,-2M269,713l0,-4M706,678l0,-5M222,697l0,-3M764,675l-1,-2M766,679l0,-3M478,697l0,-3M236,686l0,-1M256,684l-1,-2M503,696l0,-3M295,698l0,-3M108,709l0,-2M298,686l0,-1M549,671l1,-2M621,696l0,-6M736,672l0,-2M298,675l0,-5M266,707l0,-1M328,712l0,-2M160,697l0,-2M799,666l0,-2M718,667l0,-5M514,699l1,-2M323,679l0,-1M193,704l-1,-6M702,671l0,-5M254,675l-1,-3M95,709l0,-6M828,668l-1,-3M735,682l0,-1M548,682l1,-3M112,709l-1,-2M276,691l0,-1M714,697l-1,-3M229,713l-1,-6M637,678l0,-1M568,682l0,-2M724,686l0,-6M771,669l0,-6M247,676l0,-6M873,706l1,-2M853,666l0,-1M895,673l0,-1M440,695l0,-1M623,697l0,-5M531,701l0,-2M823,668l0,-3M890,677l0,-1M440,672l0,-2M184,684l0,-5M530,670l0,-1M657,680l-1,-1M689,698l0,-1M154,696l0,-5M742,669l0,-5M873,671l-1,-1M304,687l1,-5M134,688l0,-3M918,676l0,-5M771,693l0,-3M687,672l0,-6M101,682l0,-2M384,699l0,-1M171,686l0,-6M880,678l0,-1M246,697l0,-3M213,677l1,-5M598,694l0,-2M903,670l-1,-3M885,703l0,-6M285,693l-1,-2M392,706l-1,-6M502,671l0,-2M785,666l0,-3M441,689l0,-5M441,689l0,-2M254,704l0,-4M729,704l0,-6M673,686l-1,-2M648,670l0,-3M806,676l0,-6M280,679l0,-3M547,700l-1,-1M726,676l1,-3M528,679l0,-3M770,696l0,-4M508,703l1,-1M277,675l0,-4M469,709l-1,-3M148,701l0,-3M605,706l0,-3M317,684l0,-2M754,696l0,-3M592,678l0,-2M348,705l0,-1M655,703l0,-2M728,680l0,-2M461,684l0,-6M167,679l0,-4M897,704l0,-2M911,672l0,-4M533,679l0,-1M832,667l0,-6M451,703l0,-2M576,690l0,-3M175,712l0,-1M645,706l0,-6M715,687l0,-2M154,703l-1,-4M192,694l-1,-2M308,707l1,-6M302,699l0,-2M370,674l0,-3M734,691l0,-2M234,682l0,-2M475,672l0,-3M500,673l1,-2M641,671l0,-5M173,704l0,-5M421,705l0,-1M196,676l0,-5M528,676l-1,-5M91,678l0,-6M424,690l0,-3M795,688l1,-2M186,707l0,-3M863,695l0,-3M529,699l0,-1M542,689l0,-3M409,696l0,-1M225,697l0,-3M721,679l-1,-6M218,714l0,-5M703,680l0,-1M412,691l0,-1M913,684l0,-4M112,683l0,-3M234,690l0,-2M667,685l0,-2M439,697l0,-5M877,674l0,-1M501,692l0,-4M463,685l0,-4M181,690l0,-2M133,684l0,-6M487,672l0,-1M584,673l0,-3M395,683l-1,-5M795,686l0,-5M658,668l0,-3M495,674l0,-2M477,696l1,-1M676,705l0,-4M831,700l0,-2M215,715l0,-1M711,675l0,-1M757,675l0,-1M705,708l0,-6M396,681l0,-3M754,671l-1,-3M484,701l-1,-2M273,676l1,-2M694,700l0,-3M681,699l1,-5M239,684l0,-2M742,670l0,-1M472,679l0,-3M654,692l0,-4M218,694l0,-4M764,682l-1,-4M659,703l0,-4M580,674l0,-3M845,703l1,-1M888,698l0,-6M724,674l0,-5M867,695l0,-2M696,694l1,-4M608,673l0,-5M695,673l-1,-4M521,681l-1,-4M449,687l0,-2M288,675l0,-6M341,697l-1,-3M581,697l0,-1M281,683l0,-1M632,700l-1,-3M919,675l0,-2M767,674l0,-3M434,704l0,-1M920,694l0,-5M879,667l-1,-3M751,695l-1,-1M704,691l0,-1M680,675l0,-1M361,680l0,-3M719,678l0,-1M552,689l1,-5M95,715l1,-6M384,678l0,-3M96,698l0,-3M492,676l0,-2M177,705l0,-2M354,706l-1,-2M331,684l0,-3M750,684l0,-2M445,687l0,-1M800,674l0,-3M318,677l0,-1M426,698l0,-1M826,666l0,-4M518,693l1,-4M869,695l0,-3M378,686l0,-3M157,712l-1,-2M273,676l0,-6M185,691l0,-2M632,693l-1,-2M282,682l0,-3M419,686l-1,-2M614,684l0,-3M732,692l-1,-5M575,674l1,-5M762,693l-1,-2M299,694l0,-1M503,681l0,-1M186,678l-1,-4M434,711l0,-6M261,707l-1,-1M822,703l0,-1M465,672l0,-6M281,679l0,-2M807,684l0,-1M612,705l0,-1M368,676l0,-3M724,669l0,-2M471,686l0,-1M395,703l0,-1M800,704l0,-4M185,692l0,-3M866,703l-1,-2M896,705l0,-6M843,698l0,-3M518,703l0,-3M302,674l0,-2M878,668l0,-2M641,674l1,-1M524,698l0,-2M726,670l0,-5M589,691l0,-2M666,671l0,-1M394,701l0,-1M557,707l0,-3M701,691l1,-1M729,671l1,-1M144,694l0,-1M801,678l0,-3M241,688l0,-6M838,674l0,-1M666,691l0,-2M193,713l0,-1M229,697l0,-2M431,692l0,-4M343,708l0,-4M832,693l0,-5M864,665l0,-3M214,714l1,-2M98,689l-1,-1M513,673l0,-6M563,698l0,-1M253,702l0,-1M205,713l-1,-2M664,686l0,-3M514,683l0,-2M152,699l-1,-2M546,679l0,-1M455,698l0,-2M255,696l1,-5M606,673l1,-4M791,687l0,-2M415,705l-1,-6M530,706l0,-1M609,698l1,-2M468,672l1,-1M727,671l0,-3M152,685l0,-5M801,707l0,-6M584,695l0,-4M417,700l0,-6M727,674l0,-2M187,685l1,-3M709,697l0,-1M861,695l0,-2M210,714l0,-1M669,682l0,-5M822,678l-1,-3M438,675l0,-6M715,705l0,-2M767,673l0,-3M907,699l0,-3M473,691l0,-3M844,670l0,-5M926,667l0,-1M764,699l1,-4M628,692l-1,-1M365,673l0,-2M202,696l0,-3M654,702l0,-1M423,712l0,-3M739,706l0,-5M171,710l0,-1M430,683l-1,-3M460,697l0,-6M888,674l0,-2M209,677l0,-1M776,672l0,-2M214,694l0,-2M481,675l0,-6M327,683l0,-5M728,674l0,-5M135,686l0,-6M283,685l0,-5M394,676l0,-2M311,679l0,-5M432,693l0,-3M353,674l0,-6M415,681l0,-6M856,668l-1,-3M515,684l-1,-3M671,676l1,-2M314,700l1,-4M436,673l0,-2M652,682l-1,-4M810,704l1,-1M475,705l0,-5M345,692l0,-4M121,680l0,-1M524,698l-1,-2M232,698l0,-1M907,666l0,-2M324,684l0,-4M173,695l0,-6M543,671l0,-3M491,672l0,-3M775,679l0,-3M122,699l0,-1M439,705l0,-2M534,680l1,-5M417,682l-1,-6M369,687l0,-3M655,691l-1,-3M315,709l0,-3M565,679l0,-5M871,690l1,-2M608,672l0,-1M453,677l0,-3M923,693l0,-1M411,710l1,-3M591,677l0,-3M787,686l1,-4M764,666l0,-3M452,693l1,-2M433,674l-1,-1M791,681l0,-4M113,679l-1,-1M842,665l-1,-3M137,693l0,-2M917,665l0,-2M454,677l0,-1M319,701l0,-2M649,669l1,-4M178,677l0,-1M362,701l0,-6M849,666l0,-4M96,689l0,-4M791,680l1,-5M366,673l0,-2M829,666l0,-2M512,671l0,-3M811,684l0,-2M675,680l0,-4M481,697l0,-2M367,707l0,-2M192,695l0,-2M458,676l0,-1M273,677l0,-1M690,686l1,-1M639,700l0,-5M332,674l0,-5M471,707l0,-3M205,713l1,-2M522,693l-1,-2M757,704l0,-2M453,706l0,-2M441,693l0,-2M515,681l0,-2M781,704l0,-2M457,695l0,-5M662,675l0,-3M142,688l0,-3M867,706l0,-4M597,676l1,-2M523,698l0,-2M899,705l0,-1M527,671l0,-3M617,681l1,-5M699,687l0,-3M212,686l0,-3M474,685l0,-4M681,669l0,-2M703,681l0,-3M811,678l1,-3M394,678l0,-5M718,684l-1,-5M885,670l0,-4M698,692l0,-2M302,699l0,-2M589,698l0,-1M795,683l0,-2M346,691l0,-5M434,676l1,-3M162,684l0,-3M210,696l0,-2M735,673l0,-1M864,689l0,-2M704,689l0,-3M671,696l0,-2M453,708l0,-5M502,688l-1,-2M460,679l0,-1M450,676l0,-3M425,687l0,-2M173,685l1,-2M399,690l0,-2M434,706l1,-2M858,670l0,-1M197,698l0,-5M278,675l-1,-5M439,674l0,-2M641,672l1,-5M864,665l0,-6M357,687l0,-1M397,679l0,-2M729,680l0,-2M823,668l0,-2M220,694l0,-2M244,700l1,-5M443,685l0,-1M308,707l0,-2M846,697l1,-2M238,703l0,-2M509,687l0,-5M266,681l0,-2M134,691l1,-3M751,682l0,-2M158,699l0,-3M476,694l0,-3M384,692l-1,-2M891,665l0,-6M544,670l1,-1M436,675l-1,-5M587,691l1,-3M185,709l1,-6M784,684l0,-3M595,671l0,-3M401,672l1,-3M738,672l1,-1M696,672l0,-2M202,692l1,-2M135,680l1,-6M595,706l0,-2M378,702l1,-3M880,675l0,-6M327,709l-1,-2M341,678l0,-1M625,670l0,-5M705,668l0,-1M126,707l0,-5M686,690l0,-4M348,711l0,-1M135,697l0,-4M383,711l0,-1M200,696l1,-2M475,701l1,-3M374,680l0,-3M587,676l0,-2M568,678l0,-1M592,683l0,-2M323,710l0,-4M657,676l0,-2M683,677l0,-1M681,706l0,-3M872,701l0,-3M765,688l0,-1M557,670l0,-4M609,687l-1,-2M794,706l-1,-1M397,690l0,-3M229,681l0,-4M922,673l1,-1M756,692l0,-5M592,701l1,-3M890,704l1,-6M372,695l1,-3M656,679l0,-3M400,689l0,-1M231,682l0,-2M401,685l1,-4M97,692l0,-5M168,701l0,-2M145,677l1,-5M160,712l-1,-2M332,674l0,-2M831,694l1,-2M400,678l-1,-1M188,682l0,-3M803,674l0,-3M908,673l0,-1M269,675l0,-2M840,667l0,-2M836,685l0,-3M227,701l0,-6M768,686l0,-6M328,674l0,-6M707,692l0,-3M372,694l0,-4M581,693l-1,-4M805,696l0,-2M390,695l0,-2M337,696l0,-3M452,678l0,-4M173,699l0,-2M136,680l1,-1M106,678l0,-1M133,693l-1,-3M675,677l1,-5M369,682l1,-2M737,679l1,-2M228,677l0,-3M160,684l-1,-3M377,673l1,-2M310,674l0,-6M238,681l0,-3M386,676l0,-3M301,698l0,-2M617,674l0,-1M410,688l1,-3M383,710l-1,-5M514,686l0,-3M861,695l0,-2M872,706l0,-2M741,668l0,-2M512,698l-1,-4M526,673l0,-2M199,709l0,-2M225,688l0,-6M872,694l0,-2M498,702l0,-1M906,691l0,-1M428,694l-1,-5M320,678l0,-3M159,703l1,-2M523,673l0,-4M768,706l0,-1M881,678l0,-6M810,702l0,-3M291,687l0,-3M445,702l0,-5M732,688l-1,-4M459,711l0,-2M345,703l0,-1M665,684l0,-3M882,692l0,-3M842,702l1,-3M107,680l-1,-5M875,664l0,-1M727,690l0,-6M297,698l-1,-6M386,708l0,-6M375,695l0,-2M246,709l0,-4M621,703l1,-3M637,688l0,-4M329,677l0,-2M598,694l1,-2M412,684l0,-3M474,683l0,-2M477,676l0,-5M921,666l0,-5M306,675l1,-6M364,694l0,-4M868,674l1,-2M857,675l0,-5M651,707l-1,-4M602,681l0,-4M98,689l0,-6M154,700l-1,-5M489,692l0,-2M94,696l1,-5M391,687l0,-2M143,686l0,-1M424,685l0,-1M540,692l0,-2M854,701l0,-2M180,706l0,-1M419,680l0,-5M170,684l-1,-2M714,697l0,-6M204,678l-1,-1M526,698l0,-3M382,709l0,-2M407,691l0,-6M894,681l-1,-6M365,704l0,-1M405,697l0,-5M792,706l0,-3M852,665l0,-2M192,715l-1,-1M751,672l1,-2M103,685l0,-2M331,687l1,-4M343,691l0,-1M701,680l0,-1M328,677l0,-2M814,685l0,-2M328,690l0,-3M576,671l0,-6M764,700l0,-3M246,688l0,-2M744,699l-1,-1M781,679l0,-5M832,678l1,-1M359,693l0,-2M505,679l0,-4M806,667l0,-2M827,703l0,-1M589,695l1,-3M599,682l0,-2M847,705l0,-3M234,681l0,-1M732,669l0,-6M312,677l0,-1M822,666l0,-3M272,694l0,-3M646,672l1,-6M723,668l-1,-2M695,673l0,-3M160,679l0,-3M211,685l0,-2M196,689l0,-2M281,711l0,-2M447,693l0,-6M269,678l0,-3M268,692l0,-2M589,677l0,-2M188,676l0,-2M573,689l0,-2M397,707l0,-1M318,713l0,-2M334,691l-1,-5M538,706l0,-2M708,688l0,-1M713,681l0,-2M543,700l-1,-2M629,669l-1,-3M288,685l0,-2M795,696l1,-2M301,702l0,-3M393,686l-1,-6M144,709l-1,-3M233,677l0,-5M382,689l0,-1M387,689l0,-1M510,703l0,-6M595,685l0,-1M862,673l0,-3M386,694l0,-2M271,678l0,-4M578,679l0,-3M161,699l0,-4M242,690l0,-3M134,690l1,-2M732,689l0,-2M709,698l0,-2M310,699l0,-6M869,664l0,-5M542,686l0,-3M607,670l0,-1M851,686l0,-1M121,677l1,-5M122,715l0,-2M724,669l0,-2M460,685l1,-1M388,692l0,-3M436,692l1,-5M185,690l0,-2M442,705l0,-2M565,686l0,-1M698,672l0,-4M802,673l0,-3M904,670l0,-3M340,696l0,-3M675,700l0,-5M729,676l0,-2M123,685l0,-2M491,683l0,-3M193,695l0,-2M724,668l0,-2M552,699l0,-2M857,692l-1,-1M408,677l0,-1M243,709l0,-3M815,673l0,-2M717,674l0,-2M384,696l-1,-2M597,672l0,-5M301,679l0,-1M559,706l0,-1M346,674l1,-3M265,712l0,-1M914,689l0,-2M837,686l0,-1M689,680l0,-4M864,688l0,-2M545,700l0,-1M249,685l0,-2M836,666l0,-2M105,680l0,-3M785,669l0,-2M573,690l0,-6M284,690l0,-1M564,706l0,-3M458,679l0,-1M606,688l0,-1M206,678l0,-1M648,697l0,-6M361,693l0,-5M560,689l1,-6M785,673l0,-2M844,665l0,-4M320,704l-1,-1M109,707l0,-1M107,710l0,-3M154,681l0,-1M120,685l0,-2M238,696l0,-3M128,686l0,-4M641,693l0,-2M548,687l0,-6M125,684l0,-5M340,688l0,-4M609,687l0,-5M838,675l-1,-2M236,681l1,-1M555,700l0,-4M277,709l1,-3M212,714l-1,-1M781,686l1,-5M778,674l0,-1M876,669l0,-6M278,701l0,-1M893,668l0,-1M601,673l0,-5M789,696l0,-6M467,674l0,-1M301,686l0,-2M870,672l0,-2M429,674l0,-1M501,671l0,-2M262,711l0,-2M203,693l0,-2M690,673l0,-2M521,682l0,-4M831,683l0,-1M253,710l-1,-5M451,675l1,-5M460,671l0,-6M316,679l0,-2M421,694l0,-3M813,669l1,-3M687,670l0,-6M683,668v-1M383,672v-2M786,666v-3M298,674v-2M210,674v-2M344,673v-3M769,667v-2M357,671v-3M493,671v-3M503,669v-1M659,667v-2M326,673v-2M481,669v-2M569,670v-1M498,671v-3M753,667v-2M459,670v-3M163,675v-1M563,668v-1M775,667v-2M908,663v-2M667,667v-1M189,677v-2M261,674v-2M866,663v-2M265,673v-2M889,664v-2M291,675v-1M290,674v-2M490,670v-2M233,673v-1M487,669v-2M132,676v-2M756,666v-2M528,669v-2M211,674v-2M416,673v-2M258,674v-3M656,668v-2M464,670v-1M225,674v-2M308,672v-2M485,671v-3M298,673v-2M120,677v-3M318,672v-3M810,666v-2M278,673v-1M264,674v-2M889,663v-3M320,672v-2M296,674v-2M782,665v-2M761,667v-2M721,667v-2M602,669v-2M697,666v-2M567,670v-2M460,671v-3M458,671v-3M913,663v-2M415,671v-2M761,666v-1M308,674v-2M737,666v-1M406,671v-1M450,670v-2M344,673v-3M425,672v-2M338,674v-1M810,666v-2M722,666v-2M249,674v-3M584,668v-3M791,666v-1M570,669v-2M648,668v-3M360,672v-2M104,677v-2M132,675v-1M246,674v-2M331,674v-3M712,667v-2M743,667v-2M294,672v-1M544,669v-2M337,672v-2M909,664v-2M257,676v-1M345,674v-2M292,675v-3M838,665v-2M230,674v-1M470,672v-1M869,663v-2M237,676v-1M554,668v-1M342,674v-2M240,673v-2M750,665v-2M595,668v-3M521,669v-2M495,670v-1M340,674v-3M552,668v-2M465,672v-2M726,666v-1M706,665v-2M121,676v-2M526,668v-2M357,671v-1M572,668v-2M230,675v-3M375,671v-2M252,674v-2M513,669v-2M184,675v-2M437,672v-3M213,674v-3M768,665v-3M305,674v-1M459,671v-2M681,667v-3M409,671v-3M336,673v-3M572,670v-3M332,673v-2M596,670v-3M493,669v-3M619,669v-2M218,675v-3M637,666v-2M168,677v-2M591,668v-2M683,666v-3M398,673v-3M667,668v-2M607,668v-2M497,671v-1M765,665v-2M825,663v-1M168,676v-3M447,670v-2M318,673v-2M793,666v-3M569,669v-2M522,670v-2M274,674v-1M797,664v-3M758,665v-2M606,669v-2M749,666v-2M661,666v-2M876,665v-3M515,670v-2M714,667v-1M394,671v-1M924,662v-2M544,668v-2M570,669v-2M509,670v-2M120,676v-3M666,669v-2M210,674v-2M303,673v-2M394,672v-3M292,673v-2M264,673v-3M853,664v-2M121,677v-3M829,665v-3M280,673v-2M591,670v-2M913,664v-3M727,667v-1M309,675v-1M472,672v-2M225,675v-3M516,671v-2M218,674v-3M577,667v-1M544,668v-2M698,666v-2M494,670v-1M920,664v-1M188,675v-2M568,669v-1M632,669v-3M596,669v-2M529,669v-3M425,671v-3M491,669v-1M760,667v-2M480,670v-1M440,671v-1M588,668v-2M732,665v-2M514,669v-3M864,664v-2M329,673v-1M379,673v-2M848,665v-2M594,669v-2M700,668v-3M277,675v-2M456,672v-2M251,675v-2M336,673v-1M139,675v-3M200,675v-1M652,667v-2M308,675v-2M124,676v-1M538,671v-1M285,674v-3M675,668v-3M880,665v-2M506,669v-2M594,668v-2M248,674v-1M733,666v-1M218,675v-2M160,674v-2M867,665v-2M327,674v-1M851,665v-1M122,675v-1M619,670v-3M749,665v-2M100,677v-3M523,668v-3M198,675v-2M557,670v-3M716,667v-2M314,673v-1M104,678v-1M673,668v-2M207,676v-2M728,667v-2M528,668v-3M637,667v-3M755,667v-3M856,664v-1M490,670v-1M252,674v-1M640,667v-2M314,674v-1M277,675v-1M368,673v-2M446,671v-1M787,665v-2M467,672v-3M834,665v-3M716,666v-2M240,675v-3M821,664v-1M463,671v-3M324,674v-2M823,664v-2M534,670v-3M659,668v-1M616,669v-2M636,667v-2M510,669v-1M469,671v-1M719,666v-2M280,673v-3M532,669v-2M795,665v-2M453,670v-2M255,674v-1M833,663v-2M912,663v-3M478,671v-2M544,670v-2M827,664v-2M392,671v-2M661,666v-1M356,674v-1M290,675v-2M363,673v-3M711,666v-2M351,671v-2M875,664v-2M548,671v-3M532,668v-3M164,677v-2M474,671v-3M906,663v-3M476,670v-2M350,674v-1M167,675v-1M119,678v-2M899,663v-2M904,662v-1M258,673v-1M293,674v-2M651,667v-1M555,669v-3M168,676v-2M537,669v-2M844,665v-2M537,668v-3M894,663v-2M438,671v-3M615,667v-3M340,671v-3M188,676v-3M846,664v-2M460,672v-1M914,662v-2M270,675v-2M94,676v-2M253,674v-3M123,676v-2M140,678v-2M507,670v-1M728,666v-2M919,662v-1M639,668v-2M263,674v-3M616,668v-2M144,677v-2M543,669v-2M212,676v-1M835,664v-2M104,678v-1M754,666v-3M218,676v-3M874,663v-1M238,673v-1M826,665v-2M617,669v-2M215,675v-2M800,664v-3M214,676v-1M398,673v-2M506,671v-2M765,665v-3M692,667v-2M377,672v-2M916,664v-1M693,666v-2M687,666v-1M166,675v-2M728,667v-3M399,673v-2M495,669v-2M599,667v-2M687,667v-3M549,669v-2M889,663v-1M775,667v-3M764,666v-1M447,670v-3M217,675v-2M361,673v-2M110,677v-2M631,669v-1M920,662v-3M547,669v-2M499,669v-3M106,677v-2M511,670v-1M618,667v-1M154,675v-2M533,670v-3M897,663v-2M158,676v-2M860,664v-1M247,674v-2M773,666v-3M253,674v-3M315,673v-3M426,671v-3M608,669v-1M633,668v-3M109,677v-2M226,674v-3M713,666v-3M577,668v-2M546,668v-3M883,665v-1M583,668v-2M915,664v-3M495,670v-1M715,665v-2M755,667v-1M394,672v-2M297,674v-3M818,665v-1M738,666v-1M683,667v-3M728,666v-2M566,668v-1M736,666v-3M381,672v-2M226,674v-2M246,675v-2M852,663v-1M136,676v-1M698,666v-1M613,668v-1M102,676v-1M780,664v-2M237,675v-1M618,667v-1M199,674v-2M921,662v-1M924,663v-1M743,667v-3M578,668v-1M339,674v-2M856,665v-2M109,677v-3M408,670v-3M470,670v-2M680,668v-1M208,675v-2M731,666v-2M180,674v-2M519,669v-2M833,665v-2M852,663v-1M446,670v-3M573,669v-2M837,663v-3M818,665v-3M401,673v-2M500,669v-2M505,670v-3M224,676v-2M604,670v-2M622,668v-1M836,665v-3M737,665v-2M578,669v-1M343,672v-3M371,674v-1M583,667v-3M368,672v-3M375,673v-2M479,670v-2M800,664v-2M340,672v-2M529,669v-2M814,664v-3M288,674v-3M496,670v-3M260,673v-3M531,670v-1M649,666v-1M488,670v-2M589,670v-3M186,676v-1M313,673v-3M202,675v-2M720,668v-3M251,675v-2M589,668v-2M839,666v-1M660,668v-2M316,674v-1M602,668v-2M744,665v-2M470,671v-1M471,672v-3M259,674v-1M222,674v-3M341,674v-2M256,673v-2M787,666v-1M764,665v-1M318,674v-1M914,663v-2M105,676v-1M359,671v-2M342,674v-3M841,663v-2M146,675v-2M352,672v-2M342,671v-2M837,663v-3M784,665v-1M317,672v-3M720,665v-1M757,666v-3M677,668v-1M621,667v-2M139,675v-3M333,673v-2M615,668v-1M253,675v-3M701,666v-2M330,672v-2M407,673v-3M828,664v-3M365,671v-3M131,675v-3M690,668v-3M945,669l0,-8M967,653l0,-2M936,653l0,-5M942,682l0,-3M973,644l0,-4M979,621l0,-6M977,671l0,-2M989,644l0,-5M948,658l-1,-1M947,629l1,-1M985,632l0,-2M982,653l0,-3M988,669l0,-2M968,668l-1,-5M939,628l-1,-8M965,668l0,-2M948,670l-1,-5M975,667l-1,-3M975,671l1,-8M980,682l1,-1M938,690l0,-3M963,663l1,-6M937,626l1,-3M948,686l-1,-2M954,617l0,-4M979,660l-1,-5M941,626l-1,-5M951,646l1,-3M963,665l1,-6M927,644l0,-4M950,650l0,-1M937,666l-1,-3M945,694l0,-2M944,684l1,-1M958,637l0,-3M925,641l0,-3M941,688l0,-8M946,672l0,-1M934,673l0,-1M965,636l0,-2M953,684l0,-1M936,668l1,-3M965,641l0,-6M978,677l-1,-3M972,655l0,-3M938,653l-1,-6M942,688l0,-5M920,667l0,-3M971,694l0,-2M927,646l1,-4M991,682l0,-2M927,686l0,-3M937,694l1,-5M960,673l0,-4M936,644l0,-2M993,686l1,-3M992,688l0,-6M955,657l1,-2M964,651l0,-5M988,647l0,-4M954,638l0,-6M978,662l0,-2M937,648l0,-3M985,629l-1,-3M924,668l0,-5M921,674l0,-2M943,673l-1,-6M945,660l0,-6M941,675l0,-3M943,617l0,-1M951,659l0,-5M962,641l0,-2M924,674l0,-2M929,672l-1,-2M961,654l1,-2M967,697l1,-2M947,685l-1,-2M970,683l0,-4M970,685l1,-4M963,655l-1,-4M944,665l0,-3M955,685l0,-4M933,625l0,-1M982,629l0,-2M938,642l1,-4M968,667l-1,-5M959,684l0,-4M927,643l0,-2M960,624l0,-5M934,691l-1,-6M957,630l0,-8M958,675l0,-2M983,683l0,-1M930,667l0,-2M970,683l0,-4M958,677l0,-8M943,665l-1,-5M990,654l1,-6M989,684l0,-4M966,659l1,-6M924,682l0,-3M971,642l1,-3M920,658l0,-2M957,656l0,-1M951,615l0,-3M976,636l-1,-5M940,686l0,-8M945,668l-1,-2M965,649l-1,-5M921,689l0,-5M971,664l0,-8M932,698l0,-3M944,666l1,-3M941,607l-1,-4M949,638l0,-3M954,662l0,-8M938,646l0,-5M932,675l-1,-3M936,639l-1,-3M935,664l1,-3M924,678l-1,-3M946,678l1,-3M952,645l0,-2M967,645l0,-5M925,690l0,-3M957,665l1,-6M977,656l0,-3M978,658l0,-3M953,627l-1,-3M947,663l0,-6M964,683l0,-1M987,675l0,-1M956,689l0,-2M946,648l0,-4M965,632l0,-2M938,642l0,-4M941,691l0,-8M980,663l0,-1M938,657l0,-3M959,691l0,-1M987,674l1,-3M960,670l-1,-3M987,633l0,-5M927,683l0,-2M944,637l1,-2M943,625l0,-2M1000,648l0,-2M941,670l0,-8M960,667l-1,-6M934,643l1,-6M945,636l1,-2M967,666l0,-3M924,641l-1,-2M963,651l0,-4M940,693l0,-3M940,660l0,-5M982,652l0,-1M946,666l0,-5M950,690l0,-5M946,624l1,-2M949,629l0,-4M971,665l1,-8M976,639l-1,-1M955,652l0,-3M968,655l0,-2M957,609l1,-8M968,655l1,-3M948,663l0,-5M932,651l1,-5M958,668l0,-2M938,651l0,-5M929,668l-1,-5M971,661l1,-2M932,628l-1,-1M942,674l1,-3M970,674l-1,-6M967,646l1,-3M969,627l0,-2M980,660l0,-3M948,653l0,-8M961,672l0,-2M987,669l-1,-8M924,679l0,-8M934,645l0,-3M962,681l0,-6M979,630l0,-1M971,661l0,-1M972,638l0,-2M969,697l0,-1M986,632l1,-8M924,649l0,-1M972,678l0,-3M978,658l0,-6M954,642l0,-4M948,675l1,-2M982,633l0,-5M956,671l0,-5M953,651l0,-6M966,670l-1,-8M944,679l0,-1M941,684l0,-1M973,664l1,-6M970,669l-1,-3M954,685l1,-5M940,687l1,-1M975,658l-1,-3M953,663l0,-4M960,631l1,-3M975,685l1,-8M938,644l0,-2M959,620l-1,-6M965,697l0,-3M938,665l1,-5M983,654l0,-8M936,649l-1,-3M953,685l1,-3M971,664l0,-3M932,665l0,-3M962,638l-1,-6M995,686l1,-2M951,681l-1,-6M967,659l1,-6M984,663l0,-1M939,678l-1,-3M983,697l0,-3M948,670l1,-1M964,666l0,-3M979,667l-1,-8M972,659l0,-4M944,631l0,-2M976,636l1,-6M961,695l1,-8M943,691l0,-2M971,680l0,-1M941,659l0,-4M992,637l0,-3M937,679l0,-4M941,643l0,-1M976,678l0,-3M991,648l0,-1M955,637l-1,-8M968,670l-1,-2M955,600l0,-3M933,681l1,-5M945,685l0,-2M935,620l0,-6M948,666l1,-5M974,649l1,-4M960,621l0,-2M958,657l0,-3M940,640l0,-8M949,688l1,-4M986,689l1,-6M932,669l-1,-4M974,683l1,-2M946,618l1,-1M944,672l0,-1M928,640l0,-1M974,619l0,-6M954,610l-1,-8M984,654l0,-5M929,662l-1,-1M968,664l1,-8M972,642l0,-8M1005,676l-1,-8M927,656l-1,-3M951,677l0,-8M945,628l0,-1M959,623l1,-4M976,647l0,-2M936,624l0,-2M956,673l1,-8M965,607l0,-1M972,638l1,-6M947,684l0,-8M927,657l1,-4M927,648l0,-2M967,667l-1,-5M954,655l1,-2M936,664l0,-3M918,689l0,-8M941,646l0,-2M970,661l0,-5M955,642l0,-3M949,682l0,-1M943,666l0,-3M924,688l0,-5M950,664l0,-4M962,648l0,-6M950,657l0,-5M926,654l1,-8M958,651l-1,-3M975,676l0,-2M937,666l0,-6M958,689l0,-8M927,688l0,-3M988,670l1,-3M955,653l1,-5M928,656l0,-2M941,655l0,-2M935,628l-1,-2M964,656l0,-8M952,661l0,-2M952,687l0,-4M940,667l0,-6M938,635l0,-1M940,682l0,-3M922,647l0,-2M985,655l-1,-2M978,629l0,-3M939,658l0,-1M950,643l0,-3M960,666l0,-2M953,654l0,-3M966,661l0,-3M931,653l0,-4M983,647l0,-8M946,626l-1,-1M978,628l0,-1M962,668l-1,-5M989,647l0,-2M944,651l0,-5M965,678l-1,-1M934,674l0,-1M929,697l1,-2M1005,659l0,-4M961,657l1,-3M989,693l1,-3M953,648l0,-8M924,646l0,-1M939,612l0,-8M921,660l0,-3M955,678l0,-1M982,666l-1,-1M936,668l0,-6M955,675l0,-8M963,644l0,-4M918,682l0,-3M955,644l0,-2M932,669l0,-3M964,683l0,-3M941,679l-1,-2M934,642l0,-3M920,644l-1,-2M965,635l0,-4M989,659l1,-3M931,637l0,-6M976,650l0,-2M990,663l0,-6M970,658l0,-3M947,659l0,-2M970,671l0,-6M939,689l-1,-4M948,632l-1,-8M939,693l0,-2M982,676l-1,-3M956,648l1,-3M949,627l1,-6M962,692l0,-3M958,678l1,-1M936,672l0,-5M929,642l0,-8M918,664l0,-2M966,695l0,-1M942,616l0,-5M936,644l0,-2M932,671l0,-4M972,632l0,-1M947,652l-1,-1M958,633l0,-2M972,626l-1,-5M953,671l-1,-2M957,679l-1,-8M935,686l1,-1M938,688l1,-6M955,691l1,-3M944,658l0,-3M969,687l1,-3M972,671l0,-3M974,638l0,-4M964,699l0,-1M953,678l1,-3M946,638l1,-2M977,636l0,-1M934,691l0,-3M949,631l0,-2M952,668l0,-2M929,654l0,-6M958,660l0,-2M964,655l0,-8M946,668l0,-1M946,637l0,-6M930,691l-1,-5M968,671l0,-3M971,656l0,-2M936,671l0,-8M946,646l1,-8M933,675l0,-6M959,676l0,-6M977,664l-1,-2M959,685l-1,-3M963,645l1,-4M944,681l0,-3M980,665l0,-5M924,674l-1,-3M939,657l1,-6M946,664l-1,-1M972,687l1,-8M935,679l0,-8M963,661l-1,-4M949,697l0,-5M956,671l0,-5M971,620l1,-6M941,670l0,-2M950,651l0,-3M970,646l0,-6M978,631l0,-2M944,672l0,-1M981,659l1,-2M940,628l-1,-3M1000,662l-1,-4M972,616l-1,-4M967,646l0,-2M965,695l0,-6M972,661l0,-1M970,653l1,-3M924,664l0,-6M940,685l0,-5M946,616l1,-5M935,687l0,-2M91,672l-1,-5M64,684l-1,-4M45,699l-1,-3M87,706l-1,-8M78,696l1,-8M71,695l-3,-8M63,653l-1,-8M94,681l-1,-4M74,663l-3,-6M47,672l0,-8M87,701l0,-5M23,665l0,-8M65,664l-1,-8M69,681l-3,-2M19,683l-1,-8M51,682l0,-2M68,675l-2,-4M57,668l0,-6M57,693l-1,-2M60,685l0,-4M75,685l-3,-3M76,663l-1,-3M67,664l0,-4M85,663l0,-5M89,688l0,-2M47,677l-2,-4M39,710l-3,-2M70,647l0,-6M88,664l0,-6M79,630l-1,-5M46,708l-1,-3M65,672l1,-3M51,686l1,-6M89,708l0,-2M78,706l0,-2M85,689l0,-8M89,689l0,-3M51,651l0,-4M85,651l1,-5M57,694l1,-2M14,705l0,-2M68,677l-3,-4M84,672l0,-2M74,681l0,-1M86,680l1,-5M80,679l0,-3M49,662l0,-3M72,684l1,-8M68,680l1,-4M63,706l-1,-5M35,698l0,-3M84,652l-2,-6M80,678l0,-1M94,711l-3,-1M80,674l0,-8M67,700l-2,-4M73,678l0,-4M39,681l1,-8M50,699l0,-4M66,672l0,-6M27,679l0,-3M90,709l-2,-5M92,694l0,-8M48,702l1,-2M41,711l0,-1M66,668l0,-6M56,667l-1,-3M65,710l0,-8M91,669l0,-1M62,700l0,-3M44,674l-3,-8M38,691l-1,-4M80,680l0,-5M41,709l-1,-3M86,710l0,-1M91,674l-3,-3M82,667l0,-8M94,685l1,-4M25,677l-2,-4M47,669l0,-2M85,663l0,-2M94,704l0,-3M77,675l0,-3M19,694l1,-8M90,688l1,-6M73,671l-1,-6M53,687l-2,-2M77,667l1,-6M84,682l-3,-3M61,666l0,-1M61,708l0,-4M54,705l-2,-3M48,689l1,-6M40,675l0,-4M82,703l0,-5M90,687l-3,-4M69,705l-1,-2M29,684l0,-8M93,683l-2,-2M89,698l-2,-8M47,671l0,-2M24,681l-2,-1M53,694l-1,-4M67,689l-1,-8M78,711l0,-4M60,707l0,-8M74,658l1,-6M47,688l-3,-2M51,669l1,-2M84,683l-3,-6M55,689l0,-5M36,653l1,-6M91,662l0,-6M85,708l-3,-3M69,670l0,-6M51,694l1,-5M68,710l-2,-8M70,690l-1,-2M56,677l-1,-8M76,663l-1,-5M58,710l0,-5M79,674l-2,-3M44,698l0,-3M59,681l0,-2M80,658l0,-1M60,696l-3,-8M92,688l-2,-1M71,693l-2,-2M94,656l0,-3M62,648l1,-2M87,684l0,-3M81,706l0,-5M51,655l0,-5M73,685l1,-5M67,641l-1,-8M61,687l0,-3M90,664l-2,-2M83,669l0,-2M94,685l0,-3M39,668l0,-2M50,706l0,-6M42,650l-1,-5M77,699l-2,-2M78,645l0,-1M53,708l0,-2M77,692l-3,-5M35,651l-1,-2M80,707l0,-2M37,678l0,-2M89,686l0,-8M70,665l0,-5M81,683l0,-6M72,676l0,-5M78,632l1,-3M78,684l-3,-3M46,671l0,-5M45,696l-3,-4M52,685l-1,-5M68,704l1,-2M71,669l0,-3M63,669l-2,-2M19,681l1,-2M34,671l1,-3M70,707l-1,-4M66,672l0,-8M90,690l0,-2M60,687l1,-2M87,655l-1,-1M63,693l1,-5M79,689l-1,-4M48,686l1,-8M94,691l0,-2M81,692l0,-4M51,697l-3,-4M79,678l0,-8M78,677l-3,-4M59,688l-1,-5M86,654l1,-6M84,658l0,-4M78,699l1,-2M79,671l-1,-3M24,676l-1,-2M82,667l-3,-6M91,691l0,-8M82,672l0,-1M69,679l-1,-2M70,679l0,-8M31,706l-1,-3M38,676l0,-5M89,665l-3,-3M80,703l-1,-1M62,698l-3,-3M61,668l-1,-3M55,655l-1,-5M48,705l-1,-3M50,651l0,-8M84,668l0,-3M39,708l0,-2M70,674l0,-3M76,655l-2,-1M47,653l-3,-2M36,708l-3,-3M45,689l1,-8M62,668l-1,-5M73,684l-2,-5M25,711l-3,-6M89,675l-2,-1M79,689l0,-2M41,671l-1,-8M35,689l0,-4M66,635l0,-5M89,692l1,-3M82,700l-3,-8M64,708l-2,-4M81,663l-3,-8M64,694l0,-3M84,682l1,-5M46,655l-2,-1M93,651l1,-6M52,652l1,-1M53,677l0,-3M62,680l0,-3M66,698l0,-3M93,659l0,-2M77,689l-2,-3M63,694l0,-3M87,681l-1,-1M69,696l-1,-6M81,682l-2,-3M80,647l1,-2M15,692l-3,-3M84,688l-1,-1M90,696l1,-4M52,692l0,-4M39,666l-3,-1M91,666l0,-1M61,648l-3,-2M54,658l0,-1M75,681l0,-6M61,694l1,-6M77,658l1,-2M60,675l0,-4M88,679l0,-5M92,708l-1,-6M69,686l0,-3M47,657l-1,-2M94,685l1,-3M93,670l-2,-1M54,653l-3,-5M75,660l0,-1M91,664l1,-2M61,650l0,-3M87,684l0,-3M36,671l0,-8M63,690l-1,-4M38,682l0,-1M52,701l1,-8M76,694l-3,-2M42,699l-1,-4M92,678l-3,-3M34,680l0,-2M90,678l0,-1M63,690l-3,-2M57,670l0,-4M55,680l1,-2M33,691l0,-1M91,689l-3,-1M48,689l-2,-1M67,667l-2,-2M91,686l-3,-3M77,673l0,-8M60,670l1,-5M24,692l-3,-2M47,700l1,-3M57,686l1,-3M79,696l-1,-1M58,658l0,-2M78,668l0,-2M50,701l0,-2M58,678l0,-5M15,696l0,-2M88,711l0,-2M47,681l-3,-6M47,676l0,-3M86,695l0,-8M89,654l0,-8M14,688l0,-2M63,656l-3,-4M74,665l-1,-2M76,707l1,-1M70,692l1,-1M83,688l-3,-2M61,696l0,-4M68,647l0,-6M74,659l-1,-4M52,707l1,-6M61,707l0,-6M51,678l0,-3M70,709l0,-5M44,665l0,-2M52,666l0,-8M72,687l0,-3M69,683l-1,-1M93,664l-1,-8M93,668l-3,-2M91,671l-1,-1M52,675l0,-6M65,688l0,-3M86,670l0,-3M63,701l0,-1M74,655l0,-1M27,682l-1,-1M53,707l-2,-2M88,660l-2,-2M53,640l0,-4M18,671l-3,-1M52,686l-1,-3M72,677l-2,-6M77,671l-2,-2M45,647l-3,-8M77,651l0,-3M19,680l0,-2M79,690l-2,-8M94,658l-3,-1M66,648l-2,-3M72,680l0,-3M59,706l0,-2M67,695l-1,-3M65,669l1,-4M59,686l0,-5" stroke="#000" stroke-width="1" fill="none"/>
<path d="M186,665h1M538,666h1M418,660h1M214,673h1M154,664h1M361,669h1M249,665h1M539,664h1M890,648h1M755,656h1M826,663h1M388,668h1M110,667h1M662,658h1M369,671h1M816,652h1M680,661h1M365,640h1M745,662h1M427,668h1M158,667h1M464,667h1M312,671h1M296,671h1M658,662h1M626,664h1M601,658h1M668,665h1M256,668h1M896,653h1M348,671h1M874,655h1M326,668h1M171,666h1M359,669h1M288,672h1M708,662h1M403,665h1M914,657h1M807,663h1M288,670h1M448,669h1M624,656h1M318,671h1M552,666h1M616,666h1M540,651h1M850,659h1M303,667h1M534,667h1M179,667h1M409,669h1M273,670h1M175,666h1M569,662h1M852,661h1M783,663h1M335,670h1M822,659h1M558,655h1M386,666h1M398,669h1M873,642h1M829,655h1M824,654h1M495,665h1M349,662h1M340,670h1M127,668h1M353,653h1M221,668h1M830,650h1M345,669h1M830,662h1M633,660h1M430,667h1M710,659h1M279,669h1M922,660h1M166,669h1M636,663h1M859,659h1M219,672h1M130,674h1M905,649h1M804,662h1M909,645h1M394,668h1M744,664h1M865,651h1M708,664h1M346,664h1M197,673h1M633,662h1M313,669h1M578,665h1M295,662h1M320,667h1M686,660h1M656,657h1M230,672h1M885,658h1M668,662h1M694,661h1M441,651h1M464,669h1M255,671h1M826,656h1M683,653h1M180,668h1M207,672h1M666,661h1M322,671h1M700,658h1M656,666h1M308,672h1M826,659h1M547,652h1M904,660h1M763,659h1M135,669h1M377,668h1M647,665h1M202,669h1M767,659h1M383,659h1M309,654h1M332,659h1M411,656h1M779,659h1M768,664h1M381,663h1M478,669h1M554,665h1M230,654h1M525,646h1M224,665h1M825,651h1M849,653h1M466,667h1M449,665h1M911,661h1M687,652h1M825,662h1M256,669h1M247,669h1M700,665h1M148,672h1M767,663h1M479,667h1M921,661h1M668,664h1M540,666h1M357,669h1M922,653h1M245,660h1M860,657h1M314,671h1M400,662h1M386,662h1M537,657h1M140,672h1M429,666h1M550,664h1M886,656h1M768,634h1M134,670h1M712,643h1M832,657h1M628,661h1M671,658h1M410,669h1M518,667h1M861,662h1M156,673h1M521,668h1M860,663h1M867,661h1M389,659h1M888,662h1M482,668h1M447,666h1M165,674h1M887,662h1M109,668h1M416,665h1M257,670h1M156,672h1M641,654h1M366,664h1M490,669h1M445,670h1M482,669h1M843,653h1M525,657h1M144,673h1M116,674h1M317,662h1M139,665h1M373,667h1M272,672h1M123,675h1M525,665h1M578,665h1M188,674h1M440,663h1M750,659h1M839,657h1M494,657h1M425,670h1M730,650h1M464,665h1M202,669h1M364,670h1M789,653h1M552,667h1M270,666h1M479,668h1M344,666h1M859,662h1M812,663h1M252,664h1M267,671h1M300,665h1M361,670h1M415,663h1M650,665h1M294,665h1M250,642h1M240,672h1M283,671h1M818,658h1M550,663h1M251,670h1M705,654h1M861,656h1M897,660h1M671,659h1M391,665h1M516,661h1M673,664h1M522,665h1M443,658h1M526,657h1M661,665h1M435,667h1M584,662h1M817,661h1M829,638h1M408,668h1M318,670h1M817,653h1M579,665h1M344,669h1M560,667h1M916,660h1M445,665h1M571,667h1M194,665h1M907,658h1M162,656h1M239,665h1M614,663h1M625,652h1M785,661h1M137,670h1M549,664h1M898,656h1M249,670h1M881,649h1M612,665h1M720,634h1M752,659h1M915,660h1M783,632h1M738,657h1M280,668h1M103,672h1M201,673h1M496,658h1M438,667h1M723,663h1M740,653h1M658,659h1M596,666h1M734,663h1M863,662h1M245,662h1M864,662h1M910,651h1M451,668h1M434,667h1M541,666h1M921,644h1M201,670h1M116,648h1M683,661h1M256,663h1M420,662h1M500,668h1M188,671h1M907,659h1M546,664h1M858,657h1M227,665h1M821,660h1M539,668h1M433,664h1M632,662h1M124,673h1M699,664h1M272,671h1M816,660h1M805,661h1M770,661h1M258,668h1M319,662h1M220,671h1M704,664h1M237,671h1M582,661h1M787,663h1M264,656h1M505,665h1M921,658h1M698,661h1M632,663h1M196,672h1M665,661h1M653,664h1M211,656h1M641,663h1M179,672h1M117,670h1M625,664h1M446,666h1M519,662h1M736,662h1M550,667h1M139,669h1M866,657h1M658,643h1M598,661h1M107,675h1M894,658h1M456,662h1M431,669h1M881,649h1M912,660h1M762,663h1M801,663h1M837,657h1M478,667h1M854,660h1M687,659h1M428,663h1M211,665h1M834,660h1M641,665h1M451,663h1M848,662h1M458,664h1M581,658h1M296,668h1M646,662h1M400,663h1M502,665h1M470,669h1M728,663h1M479,665h1M237,662h1M223,667h1M794,662h1M924,660h1M260,671h1M188,672h1M404,666h1M363,668h1M753,661h1M833,662h1M731,651h1M286,666h1M254,667h1M859,655h1M189,673h1M365,671h1M466,658h1M136,672h1M730,655h1M526,668h1M647,662h1M385,670h1M248,669h1M278,668h1M627,664h1M205,668h1M285,665h1M364,665h1M748,663h1M740,647h1M308,666h1M534,662h1M611,655h1M563,665h1M143,673h1M645,664h1M414,670h1M598,665h1M206,669h1M530,667h1M842,662h1M859,654h1M890,661h1M792,663h1M675,658h1M320,671h1M490,667h1M815,662h1M207,671h1M460,668h1" stroke="#3f5c30" stroke-width="1" fill="none"/>
<path d="M533,658l1,-1M514,664l1,-1M978,666l1,-1M915,684l1,-1M940,687l1,-1M785,670l1,-1M207,685l1,-1M648,688l1,-1M999,667l1,-1M467,685l1,-1M398,674l1,-1M450,679l1,-1M224,658l1,-1M920,685l1,-1M313,692l1,-1M892,687l1,-1M166,693l1,-1M281,681l1,-1M309,664l1,-1M975,688l1,-1M514,695l1,-1M752,681l1,-1M150,670l1,-1M926,689l1,-1M809,681l1,-1M648,680l1,-1M452,677l1,-1M279,661l1,-1M404,675l1,-1M230,668l1,-1M288,662l1,-1M263,695l1,-1M893,688l1,-1M971,677l1,-1M730,676l1,-1M380,673l1,-1M454,673l1,-1M376,662l1,-1M351,667l1,-1M458,695l1,-1M523,685l1,-1M804,679l1,-1M968,691l1,-1M470,669l1,-1M294,692l1,-1M329,683l1,-1M350,692l1,-1M449,674l1,-1M577,674l1,-1M589,677l1,-1M773,694l1,-1M678,685l1,-1M899,663l1,-1M222,685l1,-1M796,663l1,-1M139,679l1,-1M573,683l1,-1M193,679l1,-1M732,698l1,-1M326,674l1,-1M793,668l1,-1M718,683l1,-1M533,671l1,-1M399,677l1,-1M639,678l1,-1M982,670l1,-1M314,658l1,-1M951,687l1,-1M512,684l1,-1M164,673l1,-1M178,666l1,-1M326,682l1,-1M112,690l1,-1M288,669l1,-1M702,648l1,-1M156,691l1,-1M351,667l1,-1M529,687l1,-1M923,690l1,-1M934,705l1,-1M815,669l1,-1M187,683l1,-1M373,671l1,-1M110,684l1,-1M796,686l1,-1M394,701l1,-1M653,670l1,-1M623,651l1,-1M658,662l1,-1M853,697l1,-1M420,664l1,-1M234,688l1,-1M430,678l1,-1M142,694l1,-1M577,645l1,-1M517,700l1,-1M501,679l1,-1M477,662l1,-1M270,671l1,-1M859,670l1,-1M377,677l1,-1M899,688l1,-1M120,696l1,-1M685,688l1,-1M997,667l1,-1M450,675l1,-1M187,683l1,-1M496,669l1,-1M402,658l1,-1M670,656l1,-1M372,680l1,-1M974,678l1,-1M464,688l1,-1M108,682l1,-1M385,694l1,-1M386,687l1,-1M470,699l1,-1M423,677l1,-1M116,675l1,-1M776,673l1,-1" stroke="#9fd0b0" stroke-width="1" fill="none"/>
<g stroke="#0000ff" stroke-width="1" fill="none" shape-rendering="crispEdges"><path d="M75,589 L3,677 M76,591 L3,684 M3,703 L560,696.5 L1045,693 M3,726.500 L560,720 L1050,714 M943,560 L1045,692 L1045,700 M943,572 L1040,700 L1050,714 L1050,722 M1040,700 L1040,716"/></g>
<g shape-rendering="crispEdges"><rect x="28" y="862" width="2" height="23" fill="#0000ff"/><rect x="29" y="884" width="24" height="2" fill="#00ff00"/></g>
<g font-family="Liberation Sans" font-weight="bold" font-size="13" shape-rendering="auto"><text x="28" y="859" fill="#0000ff">z</text><text x="53" y="882.500" fill="#00ff00">y</text><text x="28" y="893.500" fill="#ff1010">x</text></g>
<text x="7" y="111" font-family="Liberation Sans" font-size="12.5" font-weight="bold" fill="#fff" letter-spacing="0.55" shape-rendering="auto">Camera01</text>
</svg>
<!--SCENE-END-->
</div>
<!-- CMDPANEL -->
<div id="cmdouter"></div>
<div class="ctab act" style="left:1097px"></div>
<div class="ctab" style="left:1129px;width:28px"></div><div class="ctab" style="left:1157px"></div><div class="ctab" style="left:1186px;width:28px"></div><div class="ctab" style="left:1214px"></div><div class="ctab" style="left:1243px"></div><div class="abs" style="left:1129px;top:122px;width:149px;height:1px;background:#fff;z-index:1"></div>
<div id="cmdinner"></div>
<div class="abs" style="left:1105px;top:131px;width:24px;height:23px;background:#ececec;border:1px solid;border-color:#808080 #fff #fff #808080"></div>
<div class="combo" style="left:1117px;top:160px;width:142px;height:20px"><span class="tx" style="letter-spacing:-0.3px;font-size:11px;top:3px">Standard Primitives</span><span class="dd"></span></div>
<div class="grp" style="left:1104px;top:202px;width:165px;height:134px"></div>
<div class="roll" style="top:193px"><i>-</i>Object Type</div>
<div class="abs" style="left:1158px;top:212px;font-size:11px;color:#808080;text-shadow:1px 1px 0 #fff;letter-spacing:-0.2px">AutoGrid</div>
<div class="abs" style="left:1211px;top:212px;width:13px;height:13px;border:1px solid;border-color:#808080 #fff #fff #808080;box-shadow:inset 1px 1px 0 #404040"></div>
<div class="pbtn" style="left:1113px;top:229px">Box</div><div class="pbtn" style="left:1191px;top:229px">Cone</div>
<div class="pbtn" style="left:1113px;top:250px">Sphere</div><div class="pbtn" style="left:1191px;top:250px">GeoSphere</div>
<div class="pbtn" style="left:1113px;top:271px">Cylinder</div><div class="pbtn" style="left:1191px;top:271px">Tube</div>
<div class="pbtn" style="left:1113px;top:292px">Torus</div><div class="pbtn" style="left:1191px;top:292px">Pyramid</div>
<div class="pbtn" style="left:1113px;top:313px">Teapot</div><div class="pbtn" style="left:1191px;top:313px">Plane</div>
<div class="grp" style="left:1104px;top:351px;width:165px;height:43px"></div>
<div class="roll" style="top:342px"><i>-</i>Name and Color</div>
<div class="abs" style="left:1111px;top:365px;width:132px;height:20px;border:1px solid;border-color:#404040 #fff #fff #404040;box-shadow:inset 1px 1px 0 #000"></div>
<div class="abs" style="left:1247px;top:366px;width:15px;height:19px;background:#8c093c"></div>
<!--CMDICONS-START-->
<svg class="abs" style="left:1096px;top:94px;z-index:5" width="184" height="70" viewBox="1096 94 184 70">
<defs>
<radialGradient id="sph" cx="0.38" cy="0.35" r="0.7"><stop offset="0" stop-color="#e8f0f0"/><stop offset="0.35" stop-color="#8c9494"/><stop offset="1" stop-color="#2c3030"/></radialGradient>
<linearGradient id="arc" x1="0" y1="0" x2="1" y2="1"><stop offset="0" stop-color="#8090d0"/><stop offset="1" stop-color="#101840"/></linearGradient>
<radialGradient id="star" cx="0.5" cy="0.5" r="0.5"><stop offset="0" stop-color="#ffffe0"/><stop offset="0.5" stop-color="#f8f0a0" stop-opacity="0.8"/><stop offset="1" stop-color="#f0e890" stop-opacity="0"/></radialGradient>
</defs>
<circle cx="1109" cy="106" r="5.500" fill="url(#star)"/><path d="M1109,100v12M1103,106h12M1105,102l8,8M1113,102l-8,8" stroke="#fffff0" stroke-width="0.800" opacity="0.9"/>
<path d="M1110,106 L1122,112 L1118.500,113.500 L1122.500,119 L1121,120 L1117,114.500 L1114.500,117.500 Z" fill="#f4f4f4" stroke="#303030" stroke-width="0.900"/>
<path d="M1133,101.500 H1150 V119 H1133 Z" fill="none" stroke="#606060" stroke-width="0.600" stroke-dasharray="1,1"/><rect x="1132.300" y="100.800" width="1.600" height="1.600" fill="#000"/><rect x="1149" y="117.500" width="1.600" height="1.600" fill="#000"/>
<path d="M1135.500,118 C1135.500,108 1141,103.500 1149.500,103.500" fill="none" stroke="#18204c" stroke-width="6"/><path d="M1134.500,117.500 C1134.500,107.500 1140.500,102.500 1149.500,102.300" fill="none" stroke="#7080c0" stroke-width="1.300"/><path d="M1137.500,118 C1137.500,110 1142,105.800 1149.500,105.600" fill="none" stroke="#4858a0" stroke-width="0.900"/>
<g stroke="#282868" stroke-width="1" fill="none"><path d="M1170,108 V116 M1170,109 L1162.500,116 M1170,109 L1177.500,116"/></g><rect x="1169.200" y="108" width="1.600" height="8" fill="#787878"/>
<g fill="#ececff" stroke="#383888" stroke-width="1.100"><rect x="1166.500" y="100.500" width="7" height="7"/><rect x="1160.500" y="115.500" width="4" height="3.500"/><rect x="1168" y="115.500" width="4" height="3.500"/><rect x="1175.500" y="115.500" width="4" height="3.500"/></g>
<path d="M1192.500,104 A8,8 0 0 0 1192.500,116 M1190.500,105 A8,8 0 0 0 1190.500,115" fill="none" stroke="#707070" stroke-width="0.800"/>
<circle cx="1201" cy="110" r="6.700" fill="#e8e8e8" stroke="#000" stroke-width="1.800"/><g stroke="#606060" stroke-width="0.900"><path d="M1201,104.500V115.500M1196.200,107.200L1205.800,112.800M1205.800,107.200L1196.200,112.800"/></g><circle cx="1201" cy="110" r="1.700" fill="#f01010"/>
<rect x="1218.500" y="101.500" width="19.500" height="15" rx="1.500" fill="#585858" stroke="#202020" stroke-width="1"/><rect x="1221" y="103.500" width="14.500" height="11" fill="#fff"/><rect x="1223" y="105" width="3.500" height="7" fill="#5060d0" stroke="#203090" stroke-width="0.500"/><path d="M1230,104.500 L1233.500,113 L1226.500,113 Z" fill="#f01010"/><rect x="1223" y="117.500" width="11" height="1.800" fill="#404040"/><rect x="1229" y="117" width="2.500" height="1.300" fill="#10d040"/>
<path d="M1249,101.500 C1252,100 1262,100.500 1264.500,104.500 L1262,105 C1260,103.500 1258,103.500 1258,104.500 L1255,104.500 L1255,103.500 L1251,103.500 L1250,105 L1249,104 Z" fill="#787880" stroke="#282828" stroke-width="0.700"/><rect x="1255" y="104.500" width="3" height="8" fill="#d83020"/><path d="M1255,112 L1258,112 L1259,119.500 L1254,119.500 Z" fill="#202020"/>
<circle cx="1117.500" cy="143.200" r="6.600" fill="url(#sph)"/>
<rect x="1133.500" y="137.500" width="7" height="9" fill="#c4c4d4" stroke="#9090a8" stroke-width="0.600"/><path d="M1144.500,135.500 L1148.500,143 L1141,143 Z" fill="#808080" stroke="#303030" stroke-width="0.700"/><circle cx="1142.500" cy="145.500" r="4.300" fill="#f4f4ff" stroke="#101010" stroke-width="1.300"/><circle cx="1142.500" cy="145.500" r="0.900" fill="#000"/>
<path d="M1163,143 L1170,140.500 L1173,146 Z" fill="#f8f070"/><path d="M1158,136.500 L1160,135 L1165,140.500 L1162.500,146.500 L1161.500,142 Z" fill="#e0e0f0" stroke="#101010" stroke-width="0.900"/><path d="M1163,142 L1172.500,148.500" stroke="#101010" stroke-width="0.900"/><path d="M1166,139.500 l3,0.500" stroke="#404040" stroke-width="0.900"/>
<circle cx="1185" cy="139.200" r="2.700" fill="#fff" stroke="#000" stroke-width="1.100"/><circle cx="1191.200" cy="139.200" r="2.700" fill="#fff" stroke="#000" stroke-width="1.100"/><circle cx="1185" cy="139.200" r="0.800"/><circle cx="1191.200" cy="139.200" r="0.800"/><rect x="1183" y="142.500" width="10.500" height="4.800" fill="#c8c8c8" stroke="#000" stroke-width="1"/><rect x="1182.500" y="143" width="2.300" height="3.800" fill="#e01010"/><path d="M1193.500,144 L1196.500,142.500 V148 L1193.500,146.500 Z" fill="#000"/><rect x="1186.500" y="147.500" width="3.500" height="1.500" fill="#606060"/>
<rect x="1205.500" y="138.500" width="10" height="9" rx="1" fill="#d0d0dc" stroke="#808088" stroke-width="1"/><circle cx="1210.500" cy="142.500" r="3" fill="url(#sph)" opacity="0.55"/><circle cx="1210.500" cy="142.500" r="3" fill="none" stroke="#b0b0c0" stroke-width="0.500"/><rect x="1216" y="143" width="1.800" height="3" fill="#f01010"/><path d="M1215,147.500 H1220.500 V149" fill="none" stroke="#404040" stroke-width="0.800"/>
<path d="M1229.500,138.7 q2,-2.500 4,0 t4,0 t4,0 t4,0" fill="none" stroke="#38388c" stroke-width="1"/>
<path d="M1229.500,142.7 q2,-2.500 4,0 t4,0 t4,0 t4,0" fill="none" stroke="#38388c" stroke-width="1"/>
<path d="M1229.500,146.7 q2,-2.500 4,0 t4,0 t4,0 t4,0" fill="none" stroke="#38388c" stroke-width="1"/>
<polygon points="1262.6,140.0 1260.6,140.9 1261.7,142.7 1259.6,142.2 1259.4,144.4 1258.0,142.8 1256.6,144.4 1256.4,142.2 1254.3,142.7 1255.4,140.9 1253.4,140.0 1255.4,139.1 1254.3,137.3 1256.4,137.8 1256.6,135.6 1258.0,137.2 1259.4,135.6 1259.6,137.8 1261.7,137.3 1260.6,139.1" fill="#707070"/><circle cx="1258" cy="140" r="1.1" fill="#202020"/>
<polygon points="1268.8,145.2 1266.6,146.2 1267.8,148.3 1265.4,147.7 1265.2,150.1 1263.6,148.3 1262.0,150.1 1261.8,147.7 1259.4,148.3 1260.6,146.2 1258.4,145.2 1260.6,144.2 1259.4,142.1 1261.8,142.7 1262.0,140.3 1263.6,142.1 1265.2,140.3 1265.4,142.7 1267.8,142.1 1266.6,144.2" fill="#101010"/><circle cx="1263.6" cy="145.2" r="1.2" fill="#d8e0ff"/>
</svg>
<!--CMDICONS-END-->

<!-- BOTTOM -->
<div class="abs" style="left:1095px;top:913px;width:2px;height:32px;background:#fff"></div><div class="abs" style="left:0;top:913px;width:1095px;height:17px;background:#e0e0e0"></div><div class="abs" style="left:0;top:930px;width:1097px;height:2px;background:#fff"></div>
<div class="btn" style="left:2px;top:913px;width:14px;height:17px;font-size:11px;line-height:14px">&lt;</div>
<div class="btn" style="left:17px;top:913px;width:124px;height:17px;font-size:11px;line-height:14px">0 / 600</div>
<div class="btn" style="left:142px;top:913px;width:14px;height:17px;font-size:11px;line-height:14px">&gt;</div>
<div class="abs" style="left:0;top:932px;width:1095px;height:1px;background:#808080"></div>
<div class="abs" style="left:0;top:933px;width:1095px;height:11px;background:#e0e0e0"></div><div class="abs" style="left:0;top:944px;width:1097px;height:1px;background:#fff"></div>
<div class="abs" style="left:0;top:934px;width:3px;height:10px;border:1px solid #000;border-right:none"></div>
<div class="abs" style="left:0;top:945px;width:1097px;height:1px;background:#808080"></div>
<div class="abs" style="left:1px;top:948px;width:148px;height:23px;background:#dcc0c0;border-style:solid;border-width:2px 1px 1px 2px;border-color:#404040 #fff #fff #404040"></div>
<div class="abs" style="left:1px;top:971px;width:148px;height:22px;background:#fff;border-style:solid;border-width:2px 1px 1px 2px;border-color:#404040 #fff #fff #404040"></div><div class="abs" style="left:0;top:997px;width:1280px;height:1px;background:#fff"></div>
<div class="vsep" style="left:153px;top:947px;height:50px;border-left-color:#404040"></div>
<div class="sf" style="left:158px;top:950px;width:502px">None Selected</div>
<div class="sf" style="left:690px;top:950px;width:69px">7,564m</div>
<div class="sf" style="left:761px;top:950px;width:70px">-1,334m</div>
<div class="sf" style="left:833px;top:950px;width:70px">0,0m</div>
<div class="sf" style="left:905px;top:950px;width:100px">Grid = 0,254m</div>
<div class="sf" style="left:158px;top:975px;width:290px">Click and drag to truck the camera</div>
<div class="sf" style="left:452px;top:975px;width:50px;padding-left:6px">100,00</div>
<div class="sf" style="left:504px;top:975px;width:50px"></div>
<div class="sf" style="left:556px;top:975px;width:50px"></div>
<div class="sf" style="left:608px;top:975px;width:50px"></div>
<div class="sf" style="left:660px;top:975px;width:50px;padding-left:9px">0,56</div>
<div class="sf" style="left:716px;top:975px;width:100px"></div>
<div class="btn" style="left:1009px;top:948px;width:48px;height:46px;font-size:11px;line-height:44px;border-color:#fff #808080 #808080 #fff;box-shadow:1px 1px 0 #404040;letter-spacing:-0.2px">Animate</div>
<div class="abs" style="left:878px;top:974px;width:23px;height:21px;background:#ececec;border:1px solid;border-color:#808080 #fff #fff #808080"></div>
<div class="abs" style="left:1207px;top:972px;width:24px;height:21px;background:#c0f0c0;border:1px solid;border-color:#808080 #fff #fff #808080"></div>
<div class="abs" style="left:1086px;top:973px;width:69px;height:21px;background:#fff;border:1px solid;border-color:#808080 #fff #fff #808080;box-shadow:inset 1px 1px 0 #000;font-size:11px;line-height:19px;padding-left:5px">0</div>
<div class="vsep" style="left:904px;top:977px;height:18px"></div><div class="vsep" style="left:979px;top:977px;height:18px"></div>
<div class="vsep" style="left:1084px;top:951px;height:18px"></div><div class="vsep" style="left:1157px;top:951px;height:18px"></div><div class="vsep" style="left:1183px;top:951px;height:18px"></div>
<div class="vsep" style="left:1157px;top:976px;height:18px"></div><div class="vsep" style="left:1183px;top:976px;height:18px"></div>
<!--BOTICONS-START-->
<svg class="abs" style="left:660px;top:946px;z-index:5" width="620" height="54" viewBox="660 946 620 54">
<defs><g id="mag" transform="rotate(-45)"><path d="M-3,3.500 V0 A3,3 0 0 1 3,0 V3.500" fill="none" stroke="#900000" stroke-width="2.900"/><path d="M-3,3.500 v1.600 M3,3.500 v1.600" stroke="#fff" stroke-width="2.900"/></g>
<path id="fly2" d="M0,0 h-3 l3,-3 z" fill="#000"/></defs>
<path d="M670.500,959 v-2.500 a2.500,2.500 0 0 1 5,0 v2.500" fill="none" stroke="#202020" stroke-width="1.200"/><rect x="668.500" y="958.500" width="9" height="7" fill="#404040"/><path d="M669,960.500h8M669,962.500h8M669,964.500h8" stroke="#d0d0d0" stroke-width="0.700"/>
<path d="M824,982 L830,977.500 L839,979.500 L840,987 L833.500,991.500 L825,989 Z" fill="#fff" stroke="#606060" stroke-width="0.800"/><path d="M833.500,991.500 L834,983.500 L840,980 M834,983.500 L824.500,982" fill="none" stroke="#b0b0b0" stroke-width="0.700"/>
<rect x="854" y="977.500" width="10" height="13" fill="none" stroke="#000" stroke-width="1.600" stroke-dasharray="1.600,1.600"/><circle cx="863" cy="984.500" r="3.800" fill="#888" stroke="#303030" stroke-width="0.600"/><circle cx="861.800" cy="983.300" r="1.200" fill="#e0e0e0"/>
<path d="M882.500,982 L889.500,978 L897,981 L897,990 L890,994 L882.500,991 Z" fill="#fff" stroke="#000" stroke-width="1.100"/><path d="M890,985 L897,981 L897,990 L890,994 Z" fill="#303030"/><path d="M882.500,982 L890,985 L890,994" fill="none" stroke="#000" stroke-width="1"/>
<g transform="translate(915.5,986.500)"><use href="#mag"/></g>
<g transform="translate(937.5,986.500)"><use href="#mag"/></g>
<g transform="translate(961,986.500)"><use href="#mag"/></g>
<g transform="translate(990,986.500)"><use href="#mag"/></g>
<text x="919" y="983.500" font-family="Liberation Sans" font-size="9.500" fill="#000">3</text><use href="#fly2" x="929" y="997"/>
<path d="M941,990.500 L949,990.500 M940,984 L945,977 M944,980.500 L948,990 M943,980 l2.500,0.500 M945.500,988 l1.500,2 l1.500,-2.500 M942.500,987.500 h6" fill="none" stroke="#000" stroke-width="1"/>
<text x="963.500" y="984" font-family="Liberation Sans" font-size="9.500" fill="#000">%</text>
<rect x="994.500" y="977.500" width="6" height="5" fill="#d4d0c8" stroke="#808080" stroke-width="0.600"/><rect x="994.500" y="983.500" width="6" height="5" fill="#d4d0c8" stroke="#808080" stroke-width="0.600"/><path d="M996.200,981 l1.300,-1.800 l1.300,1.800 z M996.200,985.200 l1.300,1.800 l1.300,-1.800 z" fill="#000"/>
<g fill="#0818a0"><rect x="1063" y="953.500" width="2.600" height="12"/><path d="M1072.500,953.500 V965.500 L1065.800,959.500 Z M1079.500,953.500 V965.500 L1072.800,959.500 Z"/>
<path d="M1097.500,953.500 V965.500 L1090.500,959.500 Z"/><rect x="1099" y="953.500" width="3.200" height="12"/>
<path d="M1115,953.500 V965.500 L1126,959.500 Z"/>
<rect x="1138" y="953.500" width="3.200" height="12"/><path d="M1142.800,953.500 V965.500 L1149.800,959.500 Z"/>
<path d="M1162,953.500 V965.500 L1168.700,959.500 Z M1169,953.500 V965.500 L1175.700,959.500 Z"/><rect x="1175.500" y="953.500" width="2.600" height="12"/></g>
<use href="#fly2" x="1131" y="970"/>
<circle cx="1068" cy="987" r="3" fill="none" stroke="#0818a0" stroke-width="2.200"/><path d="M1071,987 H1080 M1076,987 V990.500 M1079,987 V990" stroke="#0818a0" stroke-width="2" fill="none"/>
<rect x="1163" y="978" width="10" height="11" fill="#f0f0ff" stroke="#0818a0" stroke-width="1.400"/><rect x="1163" y="977.500" width="10" height="2.400" fill="#0818a0"/><circle cx="1174" cy="989.500" r="4.300" fill="#fff" stroke="#a00808" stroke-width="1.200"/><path d="M1174,987 V989.500 H1176" stroke="#000" stroke-width="0.900" fill="none"/>
<path d="M1187.500,958.500 H1204 M1195.500,951 V958 M1194,953 l1.500,-2 l1.500,2" stroke="#000" stroke-width="1" fill="none"/><path d="M1195.500,959 V964 M1192,962.500 L1195.500,966.500 L1199,962.500 Z" stroke="#f01010" stroke-width="1" fill="none"/><use href="#fly2" x="1206" y="970"/>
<path d="M1210.500,955 L1218,952 L1226,955 L1223,963.500 L1218,967 L1213.500,963.500 Z" fill="#f4f4ff" stroke="#1020a0" stroke-width="1.100"/><path d="M1210.500,955 L1218,958 L1226,955 M1218,958 V967" fill="none" stroke="#1020a0" stroke-width="1"/><path d="M1218.500,958.500 L1225,956 L1222.500,963 L1218.500,966 Z" fill="#808080"/>
<path d="M1236.500,965 A6.500,6.500 0 0 1 1238,954 M1244,954 A6.500,6.500 0 0 1 1245.500,965" fill="none" stroke="#000" stroke-width="1.300"/><path d="M1234,963 l2.500,3.500 l2.500,-3 z M1243,963.500 l2.500,3 l2.500,-3.500 z" fill="#000"/><path d="M1241,950.500 V957" stroke="#f01010" stroke-width="1.200"/>
<g fill="none" stroke="#a01010" stroke-width="1.200"><rect x="1262" y="951" width="10" height="10"/><path d="M1267,951 V961 M1262,956 H1272"/></g><rect x="1256.500" y="957.500" width="9" height="9" fill="#e8e8f8" stroke="#1020a0" stroke-width="1.200"/><path d="M1256.500,957.500 l2,-2 h9 v9 l-2,2" fill="none" stroke="#1020a0" stroke-width="1"/><use href="#fly2" x="1275" y="970"/>
<path d="M1188,977 L1203,984.500 L1188,992 " fill="none" stroke="#000" stroke-width="1.300"/><path d="M1188,978.500 C1192,981 1192,988 1188,990.500 Z" fill="#c0c0c0"/>
<path d="M1213,985 C1211.500,982 1212.500,980 1214,981.500 L1214.500,979 C1215,977 1216.500,977 1216.800,979 C1217,976.500 1219,976.500 1219.200,978.500 C1219.700,976.800 1221.500,977 1221.500,979 C1222.200,977.800 1223.500,978.500 1223.500,980 L1223.500,986 C1223.500,989.500 1221.500,990 1220.500,992 L1215.500,992 C1215,989.500 1214,988 1213,985 Z" fill="#f8f8f8" stroke="#000" stroke-width="0.900"/><path d="M1216.800,979 V984 M1219.200,978.500 V984 M1221.500,979.500 V984" stroke="#000" stroke-width="0.700"/>
<circle cx="1241.500" cy="984.500" r="5" fill="#f0f0ff" stroke="#1020a0" stroke-width="1.200"/><ellipse cx="1241.500" cy="984.500" rx="8.500" ry="2.600" fill="none" stroke="#e01010" stroke-width="1.300"/><path d="M1236.500,983.500 A5,5 0 0 1 1246.500,983.500" fill="#f0f0ff" stroke="#1020a0" stroke-width="1.200"/><use href="#fly2" x="1252" y="996"/>
<rect x="1263.500" y="985" width="8.500" height="8.500" fill="none" stroke="#a01010" stroke-width="1.200"/><rect x="1257.500" y="976.500" width="11" height="11" fill="#d4d0c8" stroke="#1020a0" stroke-width="1.300"/><path d="M1260,979 L1266,985 M1260,979 h2.500 M1260,979 v2.500 M1266,985 h-2.500 M1266,985 v-2.500" stroke="#000" stroke-width="0.900" fill="none" stroke-dasharray="1.200,0.800"/>
</svg>
<!--BOTICONS-END-->

</body>
</html>
